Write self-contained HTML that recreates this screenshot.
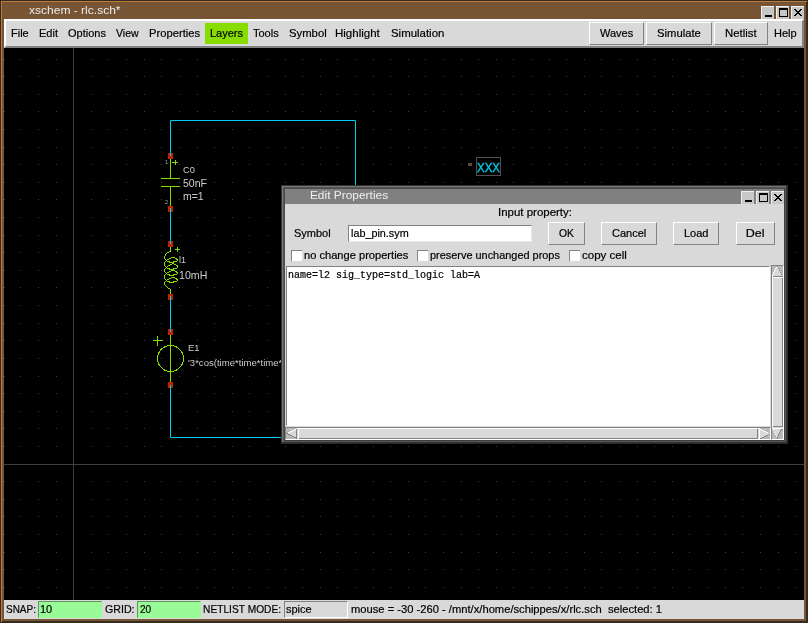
<!DOCTYPE html><html><head><meta charset="utf-8"><style>html,body{margin:0;padding:0;width:808px;height:623px;overflow:hidden;background:#2b2621}.a{position:absolute;box-sizing:content-box}svg.a{overflow:hidden}text{white-space:pre}</style></head><body><div class="a" style="left:0px;top:0px;width:808px;height:623px;background:#332a22;"></div>
<div class="a" style="left:1px;top:1px;width:806px;height:621px;background:#c07a38;"></div>
<div class="a" style="left:806px;top:2px;width:2px;height:621px;background:#332a22;"></div>
<div class="a" style="left:2px;top:621px;width:806px;height:2px;background:#332a22;"></div>
<div class="a" style="left:2px;top:2px;width:804px;height:619px;background:#765434;"></div>
<div class="a" style="left:761px;top:6px;width:12px;height:12px;background:#c6c6c6;border-top:1px solid #efefef;border-left:1px solid #efefef"></div>
<div class="a" style="left:776px;top:6px;width:12px;height:12px;background:#c6c6c6;border-top:1px solid #efefef;border-left:1px solid #efefef"></div>
<div class="a" style="left:791px;top:6px;width:12px;height:12px;background:#c6c6c6;border-top:1px solid #efefef;border-left:1px solid #efefef"></div>
<div class="a" style="left:765px;top:15px;width:7px;height:2px;background:#000;"></div>
<div class="a" style="left:779px;top:8px;width:7px;height:6px;border:1px solid #000;border-top-width:2px"></div>
<svg class="a" style="left:791px;top:6px" width="13" height="13"><path d="M3 3h2v1h-2zM9 3h2v1h-2zM4 4h2v1h-2zM8 4h2v1h-2zM5 5h4v1h-4zM6 6h2v1h-2zM5 7h4v1h-4zM4 8h2v1h-2zM8 8h2v1h-2zM3 9h2v1h-2zM9 9h2v1h-2z" fill="#000"/></svg>
<div class="a" style="left:4px;top:19px;width:796px;height:25px;background:#d9d9d9;border:2px solid;border-color:#ffffff #828282 #828282 #ffffff;"></div>
<div class="a" style="left:205px;top:23px;width:43px;height:21px;background:#88dd00;"></div>
<div class="a" style="left:589px;top:22px;width:53px;height:21px;background:#d9d9d9;border:1px solid;border-color:#ffffff #828282 #828282 #ffffff;"></div>
<div class="a" style="left:646px;top:22px;width:64px;height:21px;background:#d9d9d9;border:1px solid;border-color:#ffffff #828282 #828282 #ffffff;"></div>
<div class="a" style="left:714px;top:22px;width:52px;height:21px;background:#d9d9d9;border:1px solid;border-color:#ffffff #828282 #828282 #ffffff;"></div>
<div class="a" style="left:4px;top:48px;width:800px;height:552px;background:#000;"></div>
<svg class="a" style="left:0;top:0;will-change:transform" width="808" height="623"><clipPath id="cv"><rect x="4" y="48" width="800" height="552"/></clipPath><g clip-path="url(#cv)"><path d="M4 59h1v1h-1zM4 76h1v1h-1zM4 94h1v1h-1zM4 111h1v1h-1zM4 129h1v1h-1zM4 147h1v1h-1zM4 164h1v1h-1zM4 182h1v1h-1zM4 199h1v1h-1zM4 217h1v1h-1zM4 235h1v1h-1zM4 252h1v1h-1zM4 270h1v1h-1zM4 287h1v1h-1zM4 305h1v1h-1zM4 323h1v1h-1zM4 340h1v1h-1zM4 358h1v1h-1zM4 376h1v1h-1zM4 393h1v1h-1zM4 411h1v1h-1zM4 428h1v1h-1zM4 446h1v1h-1zM4 464h1v1h-1zM4 481h1v1h-1zM4 499h1v1h-1zM4 516h1v1h-1zM4 534h1v1h-1zM4 552h1v1h-1zM4 569h1v1h-1zM4 587h1v1h-1zM20 59h1v1h-1zM20 76h1v1h-1zM20 94h1v1h-1zM20 111h1v1h-1zM20 129h1v1h-1zM20 147h1v1h-1zM20 164h1v1h-1zM20 182h1v1h-1zM20 199h1v1h-1zM20 217h1v1h-1zM20 235h1v1h-1zM20 252h1v1h-1zM20 270h1v1h-1zM20 287h1v1h-1zM20 305h1v1h-1zM20 323h1v1h-1zM20 340h1v1h-1zM20 358h1v1h-1zM20 376h1v1h-1zM20 393h1v1h-1zM20 411h1v1h-1zM20 428h1v1h-1zM20 446h1v1h-1zM20 464h1v1h-1zM20 481h1v1h-1zM20 499h1v1h-1zM20 516h1v1h-1zM20 534h1v1h-1zM20 552h1v1h-1zM20 569h1v1h-1zM20 587h1v1h-1zM38 59h1v1h-1zM38 76h1v1h-1zM38 94h1v1h-1zM38 111h1v1h-1zM38 129h1v1h-1zM38 147h1v1h-1zM38 164h1v1h-1zM38 182h1v1h-1zM38 199h1v1h-1zM38 217h1v1h-1zM38 235h1v1h-1zM38 252h1v1h-1zM38 270h1v1h-1zM38 287h1v1h-1zM38 305h1v1h-1zM38 323h1v1h-1zM38 340h1v1h-1zM38 358h1v1h-1zM38 376h1v1h-1zM38 393h1v1h-1zM38 411h1v1h-1zM38 428h1v1h-1zM38 446h1v1h-1zM38 464h1v1h-1zM38 481h1v1h-1zM38 499h1v1h-1zM38 516h1v1h-1zM38 534h1v1h-1zM38 552h1v1h-1zM38 569h1v1h-1zM38 587h1v1h-1zM56 59h1v1h-1zM56 76h1v1h-1zM56 94h1v1h-1zM56 111h1v1h-1zM56 129h1v1h-1zM56 147h1v1h-1zM56 164h1v1h-1zM56 182h1v1h-1zM56 199h1v1h-1zM56 217h1v1h-1zM56 235h1v1h-1zM56 252h1v1h-1zM56 270h1v1h-1zM56 287h1v1h-1zM56 305h1v1h-1zM56 323h1v1h-1zM56 340h1v1h-1zM56 358h1v1h-1zM56 376h1v1h-1zM56 393h1v1h-1zM56 411h1v1h-1zM56 428h1v1h-1zM56 446h1v1h-1zM56 464h1v1h-1zM56 481h1v1h-1zM56 499h1v1h-1zM56 516h1v1h-1zM56 534h1v1h-1zM56 552h1v1h-1zM56 569h1v1h-1zM56 587h1v1h-1zM73 59h1v1h-1zM73 76h1v1h-1zM73 94h1v1h-1zM73 111h1v1h-1zM73 129h1v1h-1zM73 147h1v1h-1zM73 164h1v1h-1zM73 182h1v1h-1zM73 199h1v1h-1zM73 217h1v1h-1zM73 235h1v1h-1zM73 252h1v1h-1zM73 270h1v1h-1zM73 287h1v1h-1zM73 305h1v1h-1zM73 323h1v1h-1zM73 340h1v1h-1zM73 358h1v1h-1zM73 376h1v1h-1zM73 393h1v1h-1zM73 411h1v1h-1zM73 428h1v1h-1zM73 446h1v1h-1zM73 464h1v1h-1zM73 481h1v1h-1zM73 499h1v1h-1zM73 516h1v1h-1zM73 534h1v1h-1zM73 552h1v1h-1zM73 569h1v1h-1zM73 587h1v1h-1zM91 59h1v1h-1zM91 76h1v1h-1zM91 94h1v1h-1zM91 111h1v1h-1zM91 129h1v1h-1zM91 147h1v1h-1zM91 164h1v1h-1zM91 182h1v1h-1zM91 199h1v1h-1zM91 217h1v1h-1zM91 235h1v1h-1zM91 252h1v1h-1zM91 270h1v1h-1zM91 287h1v1h-1zM91 305h1v1h-1zM91 323h1v1h-1zM91 340h1v1h-1zM91 358h1v1h-1zM91 376h1v1h-1zM91 393h1v1h-1zM91 411h1v1h-1zM91 428h1v1h-1zM91 446h1v1h-1zM91 464h1v1h-1zM91 481h1v1h-1zM91 499h1v1h-1zM91 516h1v1h-1zM91 534h1v1h-1zM91 552h1v1h-1zM91 569h1v1h-1zM91 587h1v1h-1zM108 59h1v1h-1zM108 76h1v1h-1zM108 94h1v1h-1zM108 111h1v1h-1zM108 129h1v1h-1zM108 147h1v1h-1zM108 164h1v1h-1zM108 182h1v1h-1zM108 199h1v1h-1zM108 217h1v1h-1zM108 235h1v1h-1zM108 252h1v1h-1zM108 270h1v1h-1zM108 287h1v1h-1zM108 305h1v1h-1zM108 323h1v1h-1zM108 340h1v1h-1zM108 358h1v1h-1zM108 376h1v1h-1zM108 393h1v1h-1zM108 411h1v1h-1zM108 428h1v1h-1zM108 446h1v1h-1zM108 464h1v1h-1zM108 481h1v1h-1zM108 499h1v1h-1zM108 516h1v1h-1zM108 534h1v1h-1zM108 552h1v1h-1zM108 569h1v1h-1zM108 587h1v1h-1zM126 59h1v1h-1zM126 76h1v1h-1zM126 94h1v1h-1zM126 111h1v1h-1zM126 129h1v1h-1zM126 147h1v1h-1zM126 164h1v1h-1zM126 182h1v1h-1zM126 199h1v1h-1zM126 217h1v1h-1zM126 235h1v1h-1zM126 252h1v1h-1zM126 270h1v1h-1zM126 287h1v1h-1zM126 305h1v1h-1zM126 323h1v1h-1zM126 340h1v1h-1zM126 358h1v1h-1zM126 376h1v1h-1zM126 393h1v1h-1zM126 411h1v1h-1zM126 428h1v1h-1zM126 446h1v1h-1zM126 464h1v1h-1zM126 481h1v1h-1zM126 499h1v1h-1zM126 516h1v1h-1zM126 534h1v1h-1zM126 552h1v1h-1zM126 569h1v1h-1zM126 587h1v1h-1zM144 59h1v1h-1zM144 76h1v1h-1zM144 94h1v1h-1zM144 111h1v1h-1zM144 129h1v1h-1zM144 147h1v1h-1zM144 164h1v1h-1zM144 182h1v1h-1zM144 199h1v1h-1zM144 217h1v1h-1zM144 235h1v1h-1zM144 252h1v1h-1zM144 270h1v1h-1zM144 287h1v1h-1zM144 305h1v1h-1zM144 323h1v1h-1zM144 340h1v1h-1zM144 358h1v1h-1zM144 376h1v1h-1zM144 393h1v1h-1zM144 411h1v1h-1zM144 428h1v1h-1zM144 446h1v1h-1zM144 464h1v1h-1zM144 481h1v1h-1zM144 499h1v1h-1zM144 516h1v1h-1zM144 534h1v1h-1zM144 552h1v1h-1zM144 569h1v1h-1zM144 587h1v1h-1zM161 59h1v1h-1zM161 76h1v1h-1zM161 94h1v1h-1zM161 111h1v1h-1zM161 129h1v1h-1zM161 147h1v1h-1zM161 164h1v1h-1zM161 182h1v1h-1zM161 199h1v1h-1zM161 217h1v1h-1zM161 235h1v1h-1zM161 252h1v1h-1zM161 270h1v1h-1zM161 287h1v1h-1zM161 305h1v1h-1zM161 323h1v1h-1zM161 340h1v1h-1zM161 358h1v1h-1zM161 376h1v1h-1zM161 393h1v1h-1zM161 411h1v1h-1zM161 428h1v1h-1zM161 446h1v1h-1zM161 464h1v1h-1zM161 481h1v1h-1zM161 499h1v1h-1zM161 516h1v1h-1zM161 534h1v1h-1zM161 552h1v1h-1zM161 569h1v1h-1zM161 587h1v1h-1zM179 59h1v1h-1zM179 76h1v1h-1zM179 94h1v1h-1zM179 111h1v1h-1zM179 129h1v1h-1zM179 147h1v1h-1zM179 164h1v1h-1zM179 182h1v1h-1zM179 199h1v1h-1zM179 217h1v1h-1zM179 235h1v1h-1zM179 252h1v1h-1zM179 270h1v1h-1zM179 287h1v1h-1zM179 305h1v1h-1zM179 323h1v1h-1zM179 340h1v1h-1zM179 358h1v1h-1zM179 376h1v1h-1zM179 393h1v1h-1zM179 411h1v1h-1zM179 428h1v1h-1zM179 446h1v1h-1zM179 464h1v1h-1zM179 481h1v1h-1zM179 499h1v1h-1zM179 516h1v1h-1zM179 534h1v1h-1zM179 552h1v1h-1zM179 569h1v1h-1zM179 587h1v1h-1zM197 59h1v1h-1zM197 76h1v1h-1zM197 94h1v1h-1zM197 111h1v1h-1zM197 129h1v1h-1zM197 147h1v1h-1zM197 164h1v1h-1zM197 182h1v1h-1zM197 199h1v1h-1zM197 217h1v1h-1zM197 235h1v1h-1zM197 252h1v1h-1zM197 270h1v1h-1zM197 287h1v1h-1zM197 305h1v1h-1zM197 323h1v1h-1zM197 340h1v1h-1zM197 358h1v1h-1zM197 376h1v1h-1zM197 393h1v1h-1zM197 411h1v1h-1zM197 428h1v1h-1zM197 446h1v1h-1zM197 464h1v1h-1zM197 481h1v1h-1zM197 499h1v1h-1zM197 516h1v1h-1zM197 534h1v1h-1zM197 552h1v1h-1zM197 569h1v1h-1zM197 587h1v1h-1zM214 59h1v1h-1zM214 76h1v1h-1zM214 94h1v1h-1zM214 111h1v1h-1zM214 129h1v1h-1zM214 147h1v1h-1zM214 164h1v1h-1zM214 182h1v1h-1zM214 199h1v1h-1zM214 217h1v1h-1zM214 235h1v1h-1zM214 252h1v1h-1zM214 270h1v1h-1zM214 287h1v1h-1zM214 305h1v1h-1zM214 323h1v1h-1zM214 340h1v1h-1zM214 358h1v1h-1zM214 376h1v1h-1zM214 393h1v1h-1zM214 411h1v1h-1zM214 428h1v1h-1zM214 446h1v1h-1zM214 464h1v1h-1zM214 481h1v1h-1zM214 499h1v1h-1zM214 516h1v1h-1zM214 534h1v1h-1zM214 552h1v1h-1zM214 569h1v1h-1zM214 587h1v1h-1zM232 59h1v1h-1zM232 76h1v1h-1zM232 94h1v1h-1zM232 111h1v1h-1zM232 129h1v1h-1zM232 147h1v1h-1zM232 164h1v1h-1zM232 182h1v1h-1zM232 199h1v1h-1zM232 217h1v1h-1zM232 235h1v1h-1zM232 252h1v1h-1zM232 270h1v1h-1zM232 287h1v1h-1zM232 305h1v1h-1zM232 323h1v1h-1zM232 340h1v1h-1zM232 358h1v1h-1zM232 376h1v1h-1zM232 393h1v1h-1zM232 411h1v1h-1zM232 428h1v1h-1zM232 446h1v1h-1zM232 464h1v1h-1zM232 481h1v1h-1zM232 499h1v1h-1zM232 516h1v1h-1zM232 534h1v1h-1zM232 552h1v1h-1zM232 569h1v1h-1zM232 587h1v1h-1zM249 59h1v1h-1zM249 76h1v1h-1zM249 94h1v1h-1zM249 111h1v1h-1zM249 129h1v1h-1zM249 147h1v1h-1zM249 164h1v1h-1zM249 182h1v1h-1zM249 199h1v1h-1zM249 217h1v1h-1zM249 235h1v1h-1zM249 252h1v1h-1zM249 270h1v1h-1zM249 287h1v1h-1zM249 305h1v1h-1zM249 323h1v1h-1zM249 340h1v1h-1zM249 358h1v1h-1zM249 376h1v1h-1zM249 393h1v1h-1zM249 411h1v1h-1zM249 428h1v1h-1zM249 446h1v1h-1zM249 464h1v1h-1zM249 481h1v1h-1zM249 499h1v1h-1zM249 516h1v1h-1zM249 534h1v1h-1zM249 552h1v1h-1zM249 569h1v1h-1zM249 587h1v1h-1zM267 59h1v1h-1zM267 76h1v1h-1zM267 94h1v1h-1zM267 111h1v1h-1zM267 129h1v1h-1zM267 147h1v1h-1zM267 164h1v1h-1zM267 182h1v1h-1zM267 199h1v1h-1zM267 217h1v1h-1zM267 235h1v1h-1zM267 252h1v1h-1zM267 270h1v1h-1zM267 287h1v1h-1zM267 305h1v1h-1zM267 323h1v1h-1zM267 340h1v1h-1zM267 358h1v1h-1zM267 376h1v1h-1zM267 393h1v1h-1zM267 411h1v1h-1zM267 428h1v1h-1zM267 446h1v1h-1zM267 464h1v1h-1zM267 481h1v1h-1zM267 499h1v1h-1zM267 516h1v1h-1zM267 534h1v1h-1zM267 552h1v1h-1zM267 569h1v1h-1zM267 587h1v1h-1zM285 59h1v1h-1zM285 76h1v1h-1zM285 94h1v1h-1zM285 111h1v1h-1zM285 129h1v1h-1zM285 147h1v1h-1zM285 164h1v1h-1zM285 182h1v1h-1zM285 199h1v1h-1zM285 217h1v1h-1zM285 235h1v1h-1zM285 252h1v1h-1zM285 270h1v1h-1zM285 287h1v1h-1zM285 305h1v1h-1zM285 323h1v1h-1zM285 340h1v1h-1zM285 358h1v1h-1zM285 376h1v1h-1zM285 393h1v1h-1zM285 411h1v1h-1zM285 428h1v1h-1zM285 446h1v1h-1zM285 464h1v1h-1zM285 481h1v1h-1zM285 499h1v1h-1zM285 516h1v1h-1zM285 534h1v1h-1zM285 552h1v1h-1zM285 569h1v1h-1zM285 587h1v1h-1zM302 59h1v1h-1zM302 76h1v1h-1zM302 94h1v1h-1zM302 111h1v1h-1zM302 129h1v1h-1zM302 147h1v1h-1zM302 164h1v1h-1zM302 182h1v1h-1zM302 199h1v1h-1zM302 217h1v1h-1zM302 235h1v1h-1zM302 252h1v1h-1zM302 270h1v1h-1zM302 287h1v1h-1zM302 305h1v1h-1zM302 323h1v1h-1zM302 340h1v1h-1zM302 358h1v1h-1zM302 376h1v1h-1zM302 393h1v1h-1zM302 411h1v1h-1zM302 428h1v1h-1zM302 446h1v1h-1zM302 464h1v1h-1zM302 481h1v1h-1zM302 499h1v1h-1zM302 516h1v1h-1zM302 534h1v1h-1zM302 552h1v1h-1zM302 569h1v1h-1zM302 587h1v1h-1zM320 59h1v1h-1zM320 76h1v1h-1zM320 94h1v1h-1zM320 111h1v1h-1zM320 129h1v1h-1zM320 147h1v1h-1zM320 164h1v1h-1zM320 182h1v1h-1zM320 199h1v1h-1zM320 217h1v1h-1zM320 235h1v1h-1zM320 252h1v1h-1zM320 270h1v1h-1zM320 287h1v1h-1zM320 305h1v1h-1zM320 323h1v1h-1zM320 340h1v1h-1zM320 358h1v1h-1zM320 376h1v1h-1zM320 393h1v1h-1zM320 411h1v1h-1zM320 428h1v1h-1zM320 446h1v1h-1zM320 464h1v1h-1zM320 481h1v1h-1zM320 499h1v1h-1zM320 516h1v1h-1zM320 534h1v1h-1zM320 552h1v1h-1zM320 569h1v1h-1zM320 587h1v1h-1zM337 59h1v1h-1zM337 76h1v1h-1zM337 94h1v1h-1zM337 111h1v1h-1zM337 129h1v1h-1zM337 147h1v1h-1zM337 164h1v1h-1zM337 182h1v1h-1zM337 199h1v1h-1zM337 217h1v1h-1zM337 235h1v1h-1zM337 252h1v1h-1zM337 270h1v1h-1zM337 287h1v1h-1zM337 305h1v1h-1zM337 323h1v1h-1zM337 340h1v1h-1zM337 358h1v1h-1zM337 376h1v1h-1zM337 393h1v1h-1zM337 411h1v1h-1zM337 428h1v1h-1zM337 446h1v1h-1zM337 464h1v1h-1zM337 481h1v1h-1zM337 499h1v1h-1zM337 516h1v1h-1zM337 534h1v1h-1zM337 552h1v1h-1zM337 569h1v1h-1zM337 587h1v1h-1zM355 59h1v1h-1zM355 76h1v1h-1zM355 94h1v1h-1zM355 111h1v1h-1zM355 129h1v1h-1zM355 147h1v1h-1zM355 164h1v1h-1zM355 182h1v1h-1zM355 199h1v1h-1zM355 217h1v1h-1zM355 235h1v1h-1zM355 252h1v1h-1zM355 270h1v1h-1zM355 287h1v1h-1zM355 305h1v1h-1zM355 323h1v1h-1zM355 340h1v1h-1zM355 358h1v1h-1zM355 376h1v1h-1zM355 393h1v1h-1zM355 411h1v1h-1zM355 428h1v1h-1zM355 446h1v1h-1zM355 464h1v1h-1zM355 481h1v1h-1zM355 499h1v1h-1zM355 516h1v1h-1zM355 534h1v1h-1zM355 552h1v1h-1zM355 569h1v1h-1zM355 587h1v1h-1zM373 59h1v1h-1zM373 76h1v1h-1zM373 94h1v1h-1zM373 111h1v1h-1zM373 129h1v1h-1zM373 147h1v1h-1zM373 164h1v1h-1zM373 182h1v1h-1zM373 199h1v1h-1zM373 217h1v1h-1zM373 235h1v1h-1zM373 252h1v1h-1zM373 270h1v1h-1zM373 287h1v1h-1zM373 305h1v1h-1zM373 323h1v1h-1zM373 340h1v1h-1zM373 358h1v1h-1zM373 376h1v1h-1zM373 393h1v1h-1zM373 411h1v1h-1zM373 428h1v1h-1zM373 446h1v1h-1zM373 464h1v1h-1zM373 481h1v1h-1zM373 499h1v1h-1zM373 516h1v1h-1zM373 534h1v1h-1zM373 552h1v1h-1zM373 569h1v1h-1zM373 587h1v1h-1zM390 59h1v1h-1zM390 76h1v1h-1zM390 94h1v1h-1zM390 111h1v1h-1zM390 129h1v1h-1zM390 147h1v1h-1zM390 164h1v1h-1zM390 182h1v1h-1zM390 199h1v1h-1zM390 217h1v1h-1zM390 235h1v1h-1zM390 252h1v1h-1zM390 270h1v1h-1zM390 287h1v1h-1zM390 305h1v1h-1zM390 323h1v1h-1zM390 340h1v1h-1zM390 358h1v1h-1zM390 376h1v1h-1zM390 393h1v1h-1zM390 411h1v1h-1zM390 428h1v1h-1zM390 446h1v1h-1zM390 464h1v1h-1zM390 481h1v1h-1zM390 499h1v1h-1zM390 516h1v1h-1zM390 534h1v1h-1zM390 552h1v1h-1zM390 569h1v1h-1zM390 587h1v1h-1zM408 59h1v1h-1zM408 76h1v1h-1zM408 94h1v1h-1zM408 111h1v1h-1zM408 129h1v1h-1zM408 147h1v1h-1zM408 164h1v1h-1zM408 182h1v1h-1zM408 199h1v1h-1zM408 217h1v1h-1zM408 235h1v1h-1zM408 252h1v1h-1zM408 270h1v1h-1zM408 287h1v1h-1zM408 305h1v1h-1zM408 323h1v1h-1zM408 340h1v1h-1zM408 358h1v1h-1zM408 376h1v1h-1zM408 393h1v1h-1zM408 411h1v1h-1zM408 428h1v1h-1zM408 446h1v1h-1zM408 464h1v1h-1zM408 481h1v1h-1zM408 499h1v1h-1zM408 516h1v1h-1zM408 534h1v1h-1zM408 552h1v1h-1zM408 569h1v1h-1zM408 587h1v1h-1zM425 59h1v1h-1zM425 76h1v1h-1zM425 94h1v1h-1zM425 111h1v1h-1zM425 129h1v1h-1zM425 147h1v1h-1zM425 164h1v1h-1zM425 182h1v1h-1zM425 199h1v1h-1zM425 217h1v1h-1zM425 235h1v1h-1zM425 252h1v1h-1zM425 270h1v1h-1zM425 287h1v1h-1zM425 305h1v1h-1zM425 323h1v1h-1zM425 340h1v1h-1zM425 358h1v1h-1zM425 376h1v1h-1zM425 393h1v1h-1zM425 411h1v1h-1zM425 428h1v1h-1zM425 446h1v1h-1zM425 464h1v1h-1zM425 481h1v1h-1zM425 499h1v1h-1zM425 516h1v1h-1zM425 534h1v1h-1zM425 552h1v1h-1zM425 569h1v1h-1zM425 587h1v1h-1zM443 59h1v1h-1zM443 76h1v1h-1zM443 94h1v1h-1zM443 111h1v1h-1zM443 129h1v1h-1zM443 147h1v1h-1zM443 164h1v1h-1zM443 182h1v1h-1zM443 199h1v1h-1zM443 217h1v1h-1zM443 235h1v1h-1zM443 252h1v1h-1zM443 270h1v1h-1zM443 287h1v1h-1zM443 305h1v1h-1zM443 323h1v1h-1zM443 340h1v1h-1zM443 358h1v1h-1zM443 376h1v1h-1zM443 393h1v1h-1zM443 411h1v1h-1zM443 428h1v1h-1zM443 446h1v1h-1zM443 464h1v1h-1zM443 481h1v1h-1zM443 499h1v1h-1zM443 516h1v1h-1zM443 534h1v1h-1zM443 552h1v1h-1zM443 569h1v1h-1zM443 587h1v1h-1zM461 59h1v1h-1zM461 76h1v1h-1zM461 94h1v1h-1zM461 111h1v1h-1zM461 129h1v1h-1zM461 147h1v1h-1zM461 164h1v1h-1zM461 182h1v1h-1zM461 199h1v1h-1zM461 217h1v1h-1zM461 235h1v1h-1zM461 252h1v1h-1zM461 270h1v1h-1zM461 287h1v1h-1zM461 305h1v1h-1zM461 323h1v1h-1zM461 340h1v1h-1zM461 358h1v1h-1zM461 376h1v1h-1zM461 393h1v1h-1zM461 411h1v1h-1zM461 428h1v1h-1zM461 446h1v1h-1zM461 464h1v1h-1zM461 481h1v1h-1zM461 499h1v1h-1zM461 516h1v1h-1zM461 534h1v1h-1zM461 552h1v1h-1zM461 569h1v1h-1zM461 587h1v1h-1zM478 59h1v1h-1zM478 76h1v1h-1zM478 94h1v1h-1zM478 111h1v1h-1zM478 129h1v1h-1zM478 147h1v1h-1zM478 164h1v1h-1zM478 182h1v1h-1zM478 199h1v1h-1zM478 217h1v1h-1zM478 235h1v1h-1zM478 252h1v1h-1zM478 270h1v1h-1zM478 287h1v1h-1zM478 305h1v1h-1zM478 323h1v1h-1zM478 340h1v1h-1zM478 358h1v1h-1zM478 376h1v1h-1zM478 393h1v1h-1zM478 411h1v1h-1zM478 428h1v1h-1zM478 446h1v1h-1zM478 464h1v1h-1zM478 481h1v1h-1zM478 499h1v1h-1zM478 516h1v1h-1zM478 534h1v1h-1zM478 552h1v1h-1zM478 569h1v1h-1zM478 587h1v1h-1zM496 59h1v1h-1zM496 76h1v1h-1zM496 94h1v1h-1zM496 111h1v1h-1zM496 129h1v1h-1zM496 147h1v1h-1zM496 164h1v1h-1zM496 182h1v1h-1zM496 199h1v1h-1zM496 217h1v1h-1zM496 235h1v1h-1zM496 252h1v1h-1zM496 270h1v1h-1zM496 287h1v1h-1zM496 305h1v1h-1zM496 323h1v1h-1zM496 340h1v1h-1zM496 358h1v1h-1zM496 376h1v1h-1zM496 393h1v1h-1zM496 411h1v1h-1zM496 428h1v1h-1zM496 446h1v1h-1zM496 464h1v1h-1zM496 481h1v1h-1zM496 499h1v1h-1zM496 516h1v1h-1zM496 534h1v1h-1zM496 552h1v1h-1zM496 569h1v1h-1zM496 587h1v1h-1zM513 59h1v1h-1zM513 76h1v1h-1zM513 94h1v1h-1zM513 111h1v1h-1zM513 129h1v1h-1zM513 147h1v1h-1zM513 164h1v1h-1zM513 182h1v1h-1zM513 199h1v1h-1zM513 217h1v1h-1zM513 235h1v1h-1zM513 252h1v1h-1zM513 270h1v1h-1zM513 287h1v1h-1zM513 305h1v1h-1zM513 323h1v1h-1zM513 340h1v1h-1zM513 358h1v1h-1zM513 376h1v1h-1zM513 393h1v1h-1zM513 411h1v1h-1zM513 428h1v1h-1zM513 446h1v1h-1zM513 464h1v1h-1zM513 481h1v1h-1zM513 499h1v1h-1zM513 516h1v1h-1zM513 534h1v1h-1zM513 552h1v1h-1zM513 569h1v1h-1zM513 587h1v1h-1zM531 59h1v1h-1zM531 76h1v1h-1zM531 94h1v1h-1zM531 111h1v1h-1zM531 129h1v1h-1zM531 147h1v1h-1zM531 164h1v1h-1zM531 182h1v1h-1zM531 199h1v1h-1zM531 217h1v1h-1zM531 235h1v1h-1zM531 252h1v1h-1zM531 270h1v1h-1zM531 287h1v1h-1zM531 305h1v1h-1zM531 323h1v1h-1zM531 340h1v1h-1zM531 358h1v1h-1zM531 376h1v1h-1zM531 393h1v1h-1zM531 411h1v1h-1zM531 428h1v1h-1zM531 446h1v1h-1zM531 464h1v1h-1zM531 481h1v1h-1zM531 499h1v1h-1zM531 516h1v1h-1zM531 534h1v1h-1zM531 552h1v1h-1zM531 569h1v1h-1zM531 587h1v1h-1zM549 59h1v1h-1zM549 76h1v1h-1zM549 94h1v1h-1zM549 111h1v1h-1zM549 129h1v1h-1zM549 147h1v1h-1zM549 164h1v1h-1zM549 182h1v1h-1zM549 199h1v1h-1zM549 217h1v1h-1zM549 235h1v1h-1zM549 252h1v1h-1zM549 270h1v1h-1zM549 287h1v1h-1zM549 305h1v1h-1zM549 323h1v1h-1zM549 340h1v1h-1zM549 358h1v1h-1zM549 376h1v1h-1zM549 393h1v1h-1zM549 411h1v1h-1zM549 428h1v1h-1zM549 446h1v1h-1zM549 464h1v1h-1zM549 481h1v1h-1zM549 499h1v1h-1zM549 516h1v1h-1zM549 534h1v1h-1zM549 552h1v1h-1zM549 569h1v1h-1zM549 587h1v1h-1zM566 59h1v1h-1zM566 76h1v1h-1zM566 94h1v1h-1zM566 111h1v1h-1zM566 129h1v1h-1zM566 147h1v1h-1zM566 164h1v1h-1zM566 182h1v1h-1zM566 199h1v1h-1zM566 217h1v1h-1zM566 235h1v1h-1zM566 252h1v1h-1zM566 270h1v1h-1zM566 287h1v1h-1zM566 305h1v1h-1zM566 323h1v1h-1zM566 340h1v1h-1zM566 358h1v1h-1zM566 376h1v1h-1zM566 393h1v1h-1zM566 411h1v1h-1zM566 428h1v1h-1zM566 446h1v1h-1zM566 464h1v1h-1zM566 481h1v1h-1zM566 499h1v1h-1zM566 516h1v1h-1zM566 534h1v1h-1zM566 552h1v1h-1zM566 569h1v1h-1zM566 587h1v1h-1zM584 59h1v1h-1zM584 76h1v1h-1zM584 94h1v1h-1zM584 111h1v1h-1zM584 129h1v1h-1zM584 147h1v1h-1zM584 164h1v1h-1zM584 182h1v1h-1zM584 199h1v1h-1zM584 217h1v1h-1zM584 235h1v1h-1zM584 252h1v1h-1zM584 270h1v1h-1zM584 287h1v1h-1zM584 305h1v1h-1zM584 323h1v1h-1zM584 340h1v1h-1zM584 358h1v1h-1zM584 376h1v1h-1zM584 393h1v1h-1zM584 411h1v1h-1zM584 428h1v1h-1zM584 446h1v1h-1zM584 464h1v1h-1zM584 481h1v1h-1zM584 499h1v1h-1zM584 516h1v1h-1zM584 534h1v1h-1zM584 552h1v1h-1zM584 569h1v1h-1zM584 587h1v1h-1zM601 59h1v1h-1zM601 76h1v1h-1zM601 94h1v1h-1zM601 111h1v1h-1zM601 129h1v1h-1zM601 147h1v1h-1zM601 164h1v1h-1zM601 182h1v1h-1zM601 199h1v1h-1zM601 217h1v1h-1zM601 235h1v1h-1zM601 252h1v1h-1zM601 270h1v1h-1zM601 287h1v1h-1zM601 305h1v1h-1zM601 323h1v1h-1zM601 340h1v1h-1zM601 358h1v1h-1zM601 376h1v1h-1zM601 393h1v1h-1zM601 411h1v1h-1zM601 428h1v1h-1zM601 446h1v1h-1zM601 464h1v1h-1zM601 481h1v1h-1zM601 499h1v1h-1zM601 516h1v1h-1zM601 534h1v1h-1zM601 552h1v1h-1zM601 569h1v1h-1zM601 587h1v1h-1zM619 59h1v1h-1zM619 76h1v1h-1zM619 94h1v1h-1zM619 111h1v1h-1zM619 129h1v1h-1zM619 147h1v1h-1zM619 164h1v1h-1zM619 182h1v1h-1zM619 199h1v1h-1zM619 217h1v1h-1zM619 235h1v1h-1zM619 252h1v1h-1zM619 270h1v1h-1zM619 287h1v1h-1zM619 305h1v1h-1zM619 323h1v1h-1zM619 340h1v1h-1zM619 358h1v1h-1zM619 376h1v1h-1zM619 393h1v1h-1zM619 411h1v1h-1zM619 428h1v1h-1zM619 446h1v1h-1zM619 464h1v1h-1zM619 481h1v1h-1zM619 499h1v1h-1zM619 516h1v1h-1zM619 534h1v1h-1zM619 552h1v1h-1zM619 569h1v1h-1zM619 587h1v1h-1zM637 59h1v1h-1zM637 76h1v1h-1zM637 94h1v1h-1zM637 111h1v1h-1zM637 129h1v1h-1zM637 147h1v1h-1zM637 164h1v1h-1zM637 182h1v1h-1zM637 199h1v1h-1zM637 217h1v1h-1zM637 235h1v1h-1zM637 252h1v1h-1zM637 270h1v1h-1zM637 287h1v1h-1zM637 305h1v1h-1zM637 323h1v1h-1zM637 340h1v1h-1zM637 358h1v1h-1zM637 376h1v1h-1zM637 393h1v1h-1zM637 411h1v1h-1zM637 428h1v1h-1zM637 446h1v1h-1zM637 464h1v1h-1zM637 481h1v1h-1zM637 499h1v1h-1zM637 516h1v1h-1zM637 534h1v1h-1zM637 552h1v1h-1zM637 569h1v1h-1zM637 587h1v1h-1zM654 59h1v1h-1zM654 76h1v1h-1zM654 94h1v1h-1zM654 111h1v1h-1zM654 129h1v1h-1zM654 147h1v1h-1zM654 164h1v1h-1zM654 182h1v1h-1zM654 199h1v1h-1zM654 217h1v1h-1zM654 235h1v1h-1zM654 252h1v1h-1zM654 270h1v1h-1zM654 287h1v1h-1zM654 305h1v1h-1zM654 323h1v1h-1zM654 340h1v1h-1zM654 358h1v1h-1zM654 376h1v1h-1zM654 393h1v1h-1zM654 411h1v1h-1zM654 428h1v1h-1zM654 446h1v1h-1zM654 464h1v1h-1zM654 481h1v1h-1zM654 499h1v1h-1zM654 516h1v1h-1zM654 534h1v1h-1zM654 552h1v1h-1zM654 569h1v1h-1zM654 587h1v1h-1zM672 59h1v1h-1zM672 76h1v1h-1zM672 94h1v1h-1zM672 111h1v1h-1zM672 129h1v1h-1zM672 147h1v1h-1zM672 164h1v1h-1zM672 182h1v1h-1zM672 199h1v1h-1zM672 217h1v1h-1zM672 235h1v1h-1zM672 252h1v1h-1zM672 270h1v1h-1zM672 287h1v1h-1zM672 305h1v1h-1zM672 323h1v1h-1zM672 340h1v1h-1zM672 358h1v1h-1zM672 376h1v1h-1zM672 393h1v1h-1zM672 411h1v1h-1zM672 428h1v1h-1zM672 446h1v1h-1zM672 464h1v1h-1zM672 481h1v1h-1zM672 499h1v1h-1zM672 516h1v1h-1zM672 534h1v1h-1zM672 552h1v1h-1zM672 569h1v1h-1zM672 587h1v1h-1zM689 59h1v1h-1zM689 76h1v1h-1zM689 94h1v1h-1zM689 111h1v1h-1zM689 129h1v1h-1zM689 147h1v1h-1zM689 164h1v1h-1zM689 182h1v1h-1zM689 199h1v1h-1zM689 217h1v1h-1zM689 235h1v1h-1zM689 252h1v1h-1zM689 270h1v1h-1zM689 287h1v1h-1zM689 305h1v1h-1zM689 323h1v1h-1zM689 340h1v1h-1zM689 358h1v1h-1zM689 376h1v1h-1zM689 393h1v1h-1zM689 411h1v1h-1zM689 428h1v1h-1zM689 446h1v1h-1zM689 464h1v1h-1zM689 481h1v1h-1zM689 499h1v1h-1zM689 516h1v1h-1zM689 534h1v1h-1zM689 552h1v1h-1zM689 569h1v1h-1zM689 587h1v1h-1zM707 59h1v1h-1zM707 76h1v1h-1zM707 94h1v1h-1zM707 111h1v1h-1zM707 129h1v1h-1zM707 147h1v1h-1zM707 164h1v1h-1zM707 182h1v1h-1zM707 199h1v1h-1zM707 217h1v1h-1zM707 235h1v1h-1zM707 252h1v1h-1zM707 270h1v1h-1zM707 287h1v1h-1zM707 305h1v1h-1zM707 323h1v1h-1zM707 340h1v1h-1zM707 358h1v1h-1zM707 376h1v1h-1zM707 393h1v1h-1zM707 411h1v1h-1zM707 428h1v1h-1zM707 446h1v1h-1zM707 464h1v1h-1zM707 481h1v1h-1zM707 499h1v1h-1zM707 516h1v1h-1zM707 534h1v1h-1zM707 552h1v1h-1zM707 569h1v1h-1zM707 587h1v1h-1zM725 59h1v1h-1zM725 76h1v1h-1zM725 94h1v1h-1zM725 111h1v1h-1zM725 129h1v1h-1zM725 147h1v1h-1zM725 164h1v1h-1zM725 182h1v1h-1zM725 199h1v1h-1zM725 217h1v1h-1zM725 235h1v1h-1zM725 252h1v1h-1zM725 270h1v1h-1zM725 287h1v1h-1zM725 305h1v1h-1zM725 323h1v1h-1zM725 340h1v1h-1zM725 358h1v1h-1zM725 376h1v1h-1zM725 393h1v1h-1zM725 411h1v1h-1zM725 428h1v1h-1zM725 446h1v1h-1zM725 464h1v1h-1zM725 481h1v1h-1zM725 499h1v1h-1zM725 516h1v1h-1zM725 534h1v1h-1zM725 552h1v1h-1zM725 569h1v1h-1zM725 587h1v1h-1zM742 59h1v1h-1zM742 76h1v1h-1zM742 94h1v1h-1zM742 111h1v1h-1zM742 129h1v1h-1zM742 147h1v1h-1zM742 164h1v1h-1zM742 182h1v1h-1zM742 199h1v1h-1zM742 217h1v1h-1zM742 235h1v1h-1zM742 252h1v1h-1zM742 270h1v1h-1zM742 287h1v1h-1zM742 305h1v1h-1zM742 323h1v1h-1zM742 340h1v1h-1zM742 358h1v1h-1zM742 376h1v1h-1zM742 393h1v1h-1zM742 411h1v1h-1zM742 428h1v1h-1zM742 446h1v1h-1zM742 464h1v1h-1zM742 481h1v1h-1zM742 499h1v1h-1zM742 516h1v1h-1zM742 534h1v1h-1zM742 552h1v1h-1zM742 569h1v1h-1zM742 587h1v1h-1zM760 59h1v1h-1zM760 76h1v1h-1zM760 94h1v1h-1zM760 111h1v1h-1zM760 129h1v1h-1zM760 147h1v1h-1zM760 164h1v1h-1zM760 182h1v1h-1zM760 199h1v1h-1zM760 217h1v1h-1zM760 235h1v1h-1zM760 252h1v1h-1zM760 270h1v1h-1zM760 287h1v1h-1zM760 305h1v1h-1zM760 323h1v1h-1zM760 340h1v1h-1zM760 358h1v1h-1zM760 376h1v1h-1zM760 393h1v1h-1zM760 411h1v1h-1zM760 428h1v1h-1zM760 446h1v1h-1zM760 464h1v1h-1zM760 481h1v1h-1zM760 499h1v1h-1zM760 516h1v1h-1zM760 534h1v1h-1zM760 552h1v1h-1zM760 569h1v1h-1zM760 587h1v1h-1zM778 59h1v1h-1zM778 76h1v1h-1zM778 94h1v1h-1zM778 111h1v1h-1zM778 129h1v1h-1zM778 147h1v1h-1zM778 164h1v1h-1zM778 182h1v1h-1zM778 199h1v1h-1zM778 217h1v1h-1zM778 235h1v1h-1zM778 252h1v1h-1zM778 270h1v1h-1zM778 287h1v1h-1zM778 305h1v1h-1zM778 323h1v1h-1zM778 340h1v1h-1zM778 358h1v1h-1zM778 376h1v1h-1zM778 393h1v1h-1zM778 411h1v1h-1zM778 428h1v1h-1zM778 446h1v1h-1zM778 464h1v1h-1zM778 481h1v1h-1zM778 499h1v1h-1zM778 516h1v1h-1zM778 534h1v1h-1zM778 552h1v1h-1zM778 569h1v1h-1zM778 587h1v1h-1zM795 59h1v1h-1zM795 76h1v1h-1zM795 94h1v1h-1zM795 111h1v1h-1zM795 129h1v1h-1zM795 147h1v1h-1zM795 164h1v1h-1zM795 182h1v1h-1zM795 199h1v1h-1zM795 217h1v1h-1zM795 235h1v1h-1zM795 252h1v1h-1zM795 270h1v1h-1zM795 287h1v1h-1zM795 305h1v1h-1zM795 323h1v1h-1zM795 340h1v1h-1zM795 358h1v1h-1zM795 376h1v1h-1zM795 393h1v1h-1zM795 411h1v1h-1zM795 428h1v1h-1zM795 446h1v1h-1zM795 464h1v1h-1zM795 481h1v1h-1zM795 499h1v1h-1zM795 516h1v1h-1zM795 534h1v1h-1zM795 552h1v1h-1zM795 569h1v1h-1zM795 587h1v1h-1z" fill="#3f3f3f"/><path d="M73.5 48V600M4 464.5H804" stroke="#3f3f3f" stroke-width="1"/><path d="M170.5 158V178M161 178.5H180M161 186.5H180M170.5 187V206M172 162.5H178M175.5 160V165" stroke="#88dd00" fill="none"/><path d="M175 249.5H180M177.5 247V252" stroke="#88dd00" fill="none"/><path d="M164 256h1v1h-1zM164 257h1v1h-1zM164 258h1v1h-1zM164 262h1v1h-1zM164 263h1v1h-1zM164 264h1v1h-1zM164 265h1v1h-1zM164 269h1v1h-1zM164 270h1v1h-1zM164 271h1v1h-1zM164 275h1v1h-1zM164 276h1v1h-1zM164 277h1v1h-1zM164 278h1v1h-1zM164 282h1v1h-1zM164 283h1v1h-1zM164 284h1v1h-1zM165 254h1v1h-1zM165 255h1v1h-1zM165 259h1v1h-1zM165 261h1v1h-1zM165 266h1v1h-1zM165 268h1v1h-1zM165 272h1v1h-1zM165 274h1v1h-1zM165 279h1v1h-1zM165 281h1v1h-1zM165 285h1v1h-1zM166 253h1v1h-1zM166 260h1v1h-1zM166 267h1v1h-1zM166 273h1v1h-1zM166 280h1v1h-1zM166 286h1v1h-1zM167 252h1v1h-1zM167 259h1v1h-1zM167 261h1v1h-1zM167 266h1v1h-1zM167 268h1v1h-1zM167 272h1v1h-1zM167 274h1v1h-1zM167 279h1v1h-1zM167 281h1v1h-1zM167 287h1v1h-1zM168 252h1v1h-1zM168 259h1v1h-1zM168 261h1v1h-1zM168 265h1v1h-1zM168 268h1v1h-1zM168 272h1v1h-1zM168 274h1v1h-1zM168 279h1v1h-1zM168 281h1v1h-1zM168 288h1v1h-1zM169 251h1v1h-1zM169 258h1v1h-1zM169 261h1v1h-1zM169 262h1v1h-1zM169 265h1v1h-1zM169 268h1v1h-1zM169 269h1v1h-1zM169 271h1v1h-1zM169 274h1v1h-1zM169 275h1v1h-1zM169 278h1v1h-1zM169 281h1v1h-1zM169 282h1v1h-1zM169 288h1v1h-1zM170 247h1v1h-1zM170 248h1v1h-1zM170 249h1v1h-1zM170 250h1v1h-1zM170 251h1v1h-1zM170 258h1v1h-1zM170 262h1v1h-1zM170 264h1v1h-1zM170 269h1v1h-1zM170 271h1v1h-1zM170 275h1v1h-1zM170 278h1v1h-1zM170 282h1v1h-1zM170 289h1v1h-1zM170 290h1v1h-1zM170 291h1v1h-1zM170 292h1v1h-1zM170 293h1v1h-1zM171 257h1v1h-1zM171 262h1v1h-1zM171 264h1v1h-1zM171 269h1v1h-1zM171 270h1v1h-1zM171 275h1v1h-1zM171 277h1v1h-1zM171 282h1v1h-1zM172 257h1v1h-1zM172 262h1v1h-1zM172 263h1v1h-1zM172 269h1v1h-1zM172 270h1v1h-1zM172 275h1v1h-1zM172 277h1v1h-1zM172 282h1v1h-1zM173 257h1v1h-1zM173 261h1v1h-1zM173 262h1v1h-1zM173 263h1v1h-1zM173 268h1v1h-1zM173 269h1v1h-1zM173 270h1v1h-1zM173 274h1v1h-1zM173 275h1v1h-1zM173 277h1v1h-1zM173 281h1v1h-1zM173 282h1v1h-1zM174 257h1v1h-1zM174 261h1v1h-1zM174 264h1v1h-1zM174 268h1v1h-1zM174 270h1v1h-1zM174 274h1v1h-1zM174 277h1v1h-1zM174 281h1v1h-1zM175 258h1v1h-1zM175 261h1v1h-1zM175 264h1v1h-1zM175 268h1v1h-1zM175 271h1v1h-1zM175 274h1v1h-1zM175 278h1v1h-1zM175 281h1v1h-1zM176 258h1v1h-1zM176 259h1v1h-1zM176 261h1v1h-1zM176 265h1v1h-1zM176 268h1v1h-1zM176 271h1v1h-1zM176 272h1v1h-1zM176 274h1v1h-1zM176 278h1v1h-1zM176 279h1v1h-1zM176 281h1v1h-1zM177 259h1v1h-1zM177 260h1v1h-1zM177 265h1v1h-1zM177 266h1v1h-1zM177 267h1v1h-1zM177 272h1v1h-1zM177 273h1v1h-1zM177 279h1v1h-1zM177 280h1v1h-1z" fill="#88dd00"/><circle cx="170.5" cy="358.5" r="13" stroke="#88dd00" fill="none" shape-rendering="crispEdges"/><path d="M170.5 334V382M153 340.5H163M157.5 336V346" stroke="#88dd00" fill="none"/><rect x="168" y="153" width="5" height="6" fill="#bb2200"/><rect x="168" y="206" width="5" height="6" fill="#bb2200"/><rect x="168" y="241" width="5" height="6" fill="#bb2200"/><rect x="168" y="294" width="5" height="6" fill="#bb2200"/><rect x="168" y="329" width="5" height="6" fill="#bb2200"/><rect x="168" y="382" width="5" height="6" fill="#bb2200"/><path d="M170.5 156V120.5H355.5V200M170.5 208V244M170.5 296V332M170.5 385V437.5H290" stroke="#00ccee" fill="none"/><rect x="476.5" y="157.5" width="24" height="18" stroke="#505050" fill="none"/><rect x="468" y="163" width="4" height="3" fill="#505050"/><rect x="469" y="164" width="2" height="1" fill="#bb2200"/><text x="183.00" y="173" font-family="Liberation Sans" font-size="8.5" fill="#cccccc" textLength="11.86" lengthAdjust="spacingAndGlyphs">C0</text><text x="183.00" y="187" font-family="Liberation Sans" font-size="11" fill="#cccccc" textLength="24.07" lengthAdjust="spacingAndGlyphs">50nF</text><text x="183.00" y="200" font-family="Liberation Sans" font-size="11" fill="#cccccc" textLength="20.68" lengthAdjust="spacingAndGlyphs">m=1</text><text x="165.00" y="164" font-family="Liberation Sans" font-size="5.5" fill="#aaaaaa" textLength="3.06" lengthAdjust="spacingAndGlyphs">1</text><text x="165.00" y="204" font-family="Liberation Sans" font-size="5.5" fill="#aaaaaa" textLength="3.06" lengthAdjust="spacingAndGlyphs">2</text><text x="179.00" y="263" font-family="Liberation Sans" font-size="9" fill="#cccccc" textLength="7.02" lengthAdjust="spacingAndGlyphs">l1</text><text x="179.04" y="279" font-family="Liberation Sans" font-size="11" fill="#cccccc" textLength="28.30" lengthAdjust="spacingAndGlyphs">10mH</text><text x="188.00" y="351" font-family="Liberation Sans" font-size="8.5" fill="#cccccc" textLength="11.45" lengthAdjust="spacingAndGlyphs">E1</text><text x="188.00" y="366" font-family="Liberation Sans" font-size="8.5" fill="#cccccc" textLength="119.87" lengthAdjust="spacingAndGlyphs">'3*cos(time*time*time*1e11)'</text><text x="477.00" y="172" font-family="Liberation Sans" font-size="12" fill="#00ccee" stroke="#00ccee" stroke-width="0.35" textLength="23.01" lengthAdjust="spacingAndGlyphs">XXX</text></g></svg>
<div class="a" style="left:4px;top:600px;width:800px;height:19px;background:#d9d9d9;"></div>
<div class="a" style="left:38px;top:601px;width:62px;height:15px;background:#98fb98;border:1px solid;border-color:#5b965b #98fb98 #98fb98 #5b965b;"></div>
<div class="a" style="left:137px;top:601px;width:62px;height:15px;background:#98fb98;border:1px solid;border-color:#5b965b #98fb98 #98fb98 #5b965b;"></div>
<div class="a" style="left:284px;top:601px;width:62px;height:15px;background:#d9d9d9;border:1px solid;border-color:#828282 #ffffff #ffffff #828282;"></div>
<div class="a" style="left:281px;top:185px;width:507px;height:259px;background:#333333;"></div>
<div class="a" style="left:282px;top:186px;width:505px;height:257px;background:#777777;"></div>
<div class="a" style="left:283px;top:187px;width:503px;height:255px;background:#555555;"></div>
<div class="a" style="left:284px;top:188px;width:501px;height:253px;background:#4a4a4a;"></div>
<div class="a" style="left:785px;top:187px;width:1px;height:255px;background:#555555;"></div>
<div class="a" style="left:283px;top:441px;width:503px;height:1px;background:#555555;"></div>
<div class="a" style="left:784px;top:188px;width:1px;height:253px;background:#404040;"></div>
<div class="a" style="left:284px;top:440px;width:501px;height:1px;background:#404040;"></div>
<div class="a" style="left:786px;top:186px;width:1px;height:257px;background:#333333;"></div>
<div class="a" style="left:282px;top:442px;width:505px;height:1px;background:#333333;"></div>
<div class="a" style="left:787px;top:185px;width:1px;height:259px;background:#2a2a2a;"></div>
<div class="a" style="left:281px;top:443px;width:507px;height:1px;background:#2a2a2a;"></div>
<div class="a" style="left:285px;top:189px;width:499px;height:15px;background:#808080;"></div>
<div class="a" style="left:285px;top:204px;width:499px;height:236px;background:#d9d9d9;"></div>
<div class="a" style="left:741px;top:191px;width:12px;height:12px;background:#c8c8c8;border-top:1px solid #eeeeee;border-left:1px solid #eeeeee"></div>
<div class="a" style="left:756px;top:191px;width:12px;height:12px;background:#c8c8c8;border-top:1px solid #eeeeee;border-left:1px solid #eeeeee"></div>
<div class="a" style="left:771px;top:191px;width:12px;height:12px;background:#c8c8c8;border-top:1px solid #eeeeee;border-left:1px solid #eeeeee"></div>
<div class="a" style="left:745px;top:200px;width:7px;height:2px;background:#000;"></div>
<div class="a" style="left:759px;top:193px;width:7px;height:6px;border:1px solid #000;border-top-width:2px"></div>
<svg class="a" style="left:771px;top:191px" width="13" height="13"><path d="M3 3h2v1h-2zM9 3h2v1h-2zM4 4h2v1h-2zM8 4h2v1h-2zM5 5h4v1h-4zM6 6h2v1h-2zM5 7h4v1h-4zM4 8h2v1h-2zM8 8h2v1h-2zM3 9h2v1h-2zM9 9h2v1h-2z" fill="#000"/></svg>
<div class="a" style="left:348px;top:225px;width:182px;height:15px;background:#ffffff;border:1px solid;border-color:#828282 #e8e8e8 #e8e8e8 #828282;"></div>
<div class="a" style="left:548px;top:222px;width:35px;height:21px;background:#d9d9d9;border:1px solid;border-color:#ffffff #828282 #828282 #ffffff;"></div>
<div class="a" style="left:601px;top:222px;width:54px;height:21px;background:#d9d9d9;border:1px solid;border-color:#ffffff #828282 #828282 #ffffff;"></div>
<div class="a" style="left:673px;top:222px;width:44px;height:21px;background:#d9d9d9;border:1px solid;border-color:#ffffff #828282 #828282 #ffffff;"></div>
<div class="a" style="left:736px;top:222px;width:37px;height:21px;background:#d9d9d9;border:1px solid;border-color:#ffffff #828282 #828282 #ffffff;"></div>
<div class="a" style="left:291px;top:250px;width:10px;height:10px;background:#fff;border-top:1px solid #828282;border-left:1px solid #828282"></div>
<div class="a" style="left:417px;top:250px;width:10px;height:10px;background:#fff;border-top:1px solid #828282;border-left:1px solid #828282"></div>
<div class="a" style="left:569px;top:250px;width:10px;height:10px;background:#fff;border-top:1px solid #828282;border-left:1px solid #828282"></div>
<div class="a" style="left:286px;top:266px;width:482px;height:158px;background:#fff;border:1px solid;border-color:#828282 #fff #fff #828282"></div>
<div class="a" style="left:771px;top:265px;width:11px;height:173px;background:#d9d9d9;border:1px solid;border-color:#828282 #ffffff #ffffff #828282;"></div>
<div class="a" style="left:285px;top:427px;width:484px;height:11px;background:#d9d9d9;border:1px solid;border-color:#828282 #ffffff #ffffff #828282;"></div>
<svg class="a" style="left:0;top:0" width="808" height="623"><rect x="772" y="266" width="11" height="11" fill="#b8b8b8"/><rect x="772" y="277" width="11" height="150" fill="#d9d9d9"/><rect x="772" y="428" width="11" height="11" fill="#b8b8b8"/><rect x="286" y="428" width="11" height="11" fill="#b8b8b8"/><rect x="298" y="428" width="460" height="11" fill="#d9d9d9"/><rect x="759" y="428" width="11" height="11" fill="#b8b8b8"/><path d="M777 267h1v1h-1zM776 268h1v1h-1zM777 268h1v1h-1zM778 268h1v1h-1zM776 269h1v1h-1zM777 269h1v1h-1zM778 269h1v1h-1zM775 270h1v1h-1zM776 270h1v1h-1zM777 270h1v1h-1zM778 270h1v1h-1zM779 270h1v1h-1zM775 271h1v1h-1zM776 271h1v1h-1zM777 271h1v1h-1zM778 271h1v1h-1zM779 271h1v1h-1zM774 272h1v1h-1zM775 272h1v1h-1zM776 272h1v1h-1zM777 272h1v1h-1zM778 272h1v1h-1zM779 272h1v1h-1zM780 272h1v1h-1zM774 273h1v1h-1zM775 273h1v1h-1zM776 273h1v1h-1zM777 273h1v1h-1zM778 273h1v1h-1zM779 273h1v1h-1zM780 273h1v1h-1zM773 274h1v1h-1zM774 274h1v1h-1zM775 274h1v1h-1zM776 274h1v1h-1zM777 274h1v1h-1zM778 274h1v1h-1zM779 274h1v1h-1zM780 274h1v1h-1zM781 274h1v1h-1zM773 275h1v1h-1zM774 275h1v1h-1zM775 275h1v1h-1zM776 275h1v1h-1zM777 275h1v1h-1zM778 275h1v1h-1zM779 275h1v1h-1zM780 275h1v1h-1zM781 275h1v1h-1zM773 429h1v1h-1zM774 429h1v1h-1zM775 429h1v1h-1zM776 429h1v1h-1zM777 429h1v1h-1zM778 429h1v1h-1zM779 429h1v1h-1zM780 429h1v1h-1zM774 430h1v1h-1zM775 430h1v1h-1zM776 430h1v1h-1zM777 430h1v1h-1zM778 430h1v1h-1zM779 430h1v1h-1zM774 431h1v1h-1zM775 431h1v1h-1zM776 431h1v1h-1zM777 431h1v1h-1zM778 431h1v1h-1zM779 431h1v1h-1zM775 432h1v1h-1zM776 432h1v1h-1zM777 432h1v1h-1zM778 432h1v1h-1zM775 433h1v1h-1zM776 433h1v1h-1zM777 433h1v1h-1zM778 433h1v1h-1zM776 434h1v1h-1zM777 434h1v1h-1zM776 435h1v1h-1zM777 435h1v1h-1zM288 433h1v1h-1zM289 433h1v1h-1zM290 432h1v1h-1zM290 433h1v1h-1zM290 434h1v1h-1zM291 432h1v1h-1zM291 433h1v1h-1zM291 434h1v1h-1zM292 431h1v1h-1zM292 432h1v1h-1zM292 433h1v1h-1zM292 434h1v1h-1zM292 435h1v1h-1zM293 431h1v1h-1zM293 432h1v1h-1zM293 433h1v1h-1zM293 434h1v1h-1zM293 435h1v1h-1zM294 430h1v1h-1zM294 431h1v1h-1zM294 432h1v1h-1zM294 433h1v1h-1zM294 434h1v1h-1zM294 435h1v1h-1zM294 436h1v1h-1zM295 430h1v1h-1zM295 431h1v1h-1zM295 432h1v1h-1zM295 433h1v1h-1zM295 434h1v1h-1zM295 435h1v1h-1zM295 436h1v1h-1zM760 430h1v1h-1zM760 431h1v1h-1zM760 432h1v1h-1zM760 433h1v1h-1zM760 434h1v1h-1zM760 435h1v1h-1zM760 436h1v1h-1zM760 437h1v1h-1zM761 430h1v1h-1zM761 431h1v1h-1zM761 432h1v1h-1zM761 433h1v1h-1zM761 434h1v1h-1zM761 435h1v1h-1zM761 436h1v1h-1zM761 437h1v1h-1zM762 431h1v1h-1zM762 432h1v1h-1zM762 433h1v1h-1zM762 434h1v1h-1zM762 435h1v1h-1zM762 436h1v1h-1zM763 431h1v1h-1zM763 432h1v1h-1zM763 433h1v1h-1zM763 434h1v1h-1zM763 435h1v1h-1zM763 436h1v1h-1zM764 432h1v1h-1zM764 433h1v1h-1zM764 434h1v1h-1zM764 435h1v1h-1zM765 432h1v1h-1zM765 433h1v1h-1zM765 434h1v1h-1zM765 435h1v1h-1zM766 433h1v1h-1zM766 434h1v1h-1zM767 433h1v1h-1zM767 434h1v1h-1z" fill="#d9d9d9"/><path d="M776 267h1v1h-1zM775 268h1v1h-1zM775 269h1v1h-1zM774 270h1v1h-1zM774 271h1v1h-1zM773 272h1v1h-1zM773 273h1v1h-1zM772 274h1v1h-1zM772 275h1v1h-1zM772 276h1v1h-1zM772 277h1v1h-1zM773 277h1v1h-1zM774 277h1v1h-1zM775 277h1v1h-1zM776 277h1v1h-1zM777 277h1v1h-1zM778 277h1v1h-1zM779 277h1v1h-1zM780 277h1v1h-1zM781 277h1v1h-1zM782 277h1v1h-1zM772 278h1v1h-1zM772 279h1v1h-1zM772 280h1v1h-1zM772 281h1v1h-1zM772 282h1v1h-1zM772 283h1v1h-1zM772 284h1v1h-1zM772 285h1v1h-1zM772 286h1v1h-1zM772 287h1v1h-1zM772 288h1v1h-1zM772 289h1v1h-1zM772 290h1v1h-1zM772 291h1v1h-1zM772 292h1v1h-1zM772 293h1v1h-1zM772 294h1v1h-1zM772 295h1v1h-1zM772 296h1v1h-1zM772 297h1v1h-1zM772 298h1v1h-1zM772 299h1v1h-1zM772 300h1v1h-1zM772 301h1v1h-1zM772 302h1v1h-1zM772 303h1v1h-1zM772 304h1v1h-1zM772 305h1v1h-1zM772 306h1v1h-1zM772 307h1v1h-1zM772 308h1v1h-1zM772 309h1v1h-1zM772 310h1v1h-1zM772 311h1v1h-1zM772 312h1v1h-1zM772 313h1v1h-1zM772 314h1v1h-1zM772 315h1v1h-1zM772 316h1v1h-1zM772 317h1v1h-1zM772 318h1v1h-1zM772 319h1v1h-1zM772 320h1v1h-1zM772 321h1v1h-1zM772 322h1v1h-1zM772 323h1v1h-1zM772 324h1v1h-1zM772 325h1v1h-1zM772 326h1v1h-1zM772 327h1v1h-1zM772 328h1v1h-1zM772 329h1v1h-1zM772 330h1v1h-1zM772 331h1v1h-1zM772 332h1v1h-1zM772 333h1v1h-1zM772 334h1v1h-1zM772 335h1v1h-1zM772 336h1v1h-1zM772 337h1v1h-1zM772 338h1v1h-1zM772 339h1v1h-1zM772 340h1v1h-1zM772 341h1v1h-1zM772 342h1v1h-1zM772 343h1v1h-1zM772 344h1v1h-1zM772 345h1v1h-1zM772 346h1v1h-1zM772 347h1v1h-1zM772 348h1v1h-1zM772 349h1v1h-1zM772 350h1v1h-1zM772 351h1v1h-1zM772 352h1v1h-1zM772 353h1v1h-1zM772 354h1v1h-1zM772 355h1v1h-1zM772 356h1v1h-1zM772 357h1v1h-1zM772 358h1v1h-1zM772 359h1v1h-1zM772 360h1v1h-1zM772 361h1v1h-1zM772 362h1v1h-1zM772 363h1v1h-1zM772 364h1v1h-1zM772 365h1v1h-1zM772 366h1v1h-1zM772 367h1v1h-1zM772 368h1v1h-1zM772 369h1v1h-1zM772 370h1v1h-1zM772 371h1v1h-1zM772 372h1v1h-1zM772 373h1v1h-1zM772 374h1v1h-1zM772 375h1v1h-1zM772 376h1v1h-1zM772 377h1v1h-1zM772 378h1v1h-1zM772 379h1v1h-1zM772 380h1v1h-1zM772 381h1v1h-1zM772 382h1v1h-1zM772 383h1v1h-1zM772 384h1v1h-1zM772 385h1v1h-1zM772 386h1v1h-1zM772 387h1v1h-1zM772 388h1v1h-1zM772 389h1v1h-1zM772 390h1v1h-1zM772 391h1v1h-1zM772 392h1v1h-1zM772 393h1v1h-1zM772 394h1v1h-1zM772 395h1v1h-1zM772 396h1v1h-1zM772 397h1v1h-1zM772 398h1v1h-1zM772 399h1v1h-1zM772 400h1v1h-1zM772 401h1v1h-1zM772 402h1v1h-1zM772 403h1v1h-1zM772 404h1v1h-1zM772 405h1v1h-1zM772 406h1v1h-1zM772 407h1v1h-1zM772 408h1v1h-1zM772 409h1v1h-1zM772 410h1v1h-1zM772 411h1v1h-1zM772 412h1v1h-1zM772 413h1v1h-1zM772 414h1v1h-1zM772 415h1v1h-1zM772 416h1v1h-1zM772 417h1v1h-1zM772 418h1v1h-1zM772 419h1v1h-1zM772 420h1v1h-1zM772 421h1v1h-1zM772 422h1v1h-1zM772 423h1v1h-1zM772 424h1v1h-1zM772 425h1v1h-1zM772 426h1v1h-1zM772 428h1v1h-1zM773 428h1v1h-1zM774 428h1v1h-1zM775 428h1v1h-1zM776 428h1v1h-1zM777 428h1v1h-1zM778 428h1v1h-1zM779 428h1v1h-1zM780 428h1v1h-1zM781 428h1v1h-1zM782 428h1v1h-1zM773 430h1v1h-1zM774 432h1v1h-1zM775 434h1v1h-1zM776 436h1v1h-1zM296 428h1v1h-1zM294 429h1v1h-1zM295 429h1v1h-1zM292 430h1v1h-1zM293 430h1v1h-1zM290 431h1v1h-1zM291 431h1v1h-1zM288 432h1v1h-1zM289 432h1v1h-1zM298 428h1v1h-1zM298 429h1v1h-1zM298 430h1v1h-1zM298 431h1v1h-1zM298 432h1v1h-1zM298 433h1v1h-1zM298 434h1v1h-1zM298 435h1v1h-1zM298 436h1v1h-1zM298 437h1v1h-1zM298 438h1v1h-1zM299 428h1v1h-1zM300 428h1v1h-1zM301 428h1v1h-1zM302 428h1v1h-1zM303 428h1v1h-1zM304 428h1v1h-1zM305 428h1v1h-1zM306 428h1v1h-1zM307 428h1v1h-1zM308 428h1v1h-1zM309 428h1v1h-1zM310 428h1v1h-1zM311 428h1v1h-1zM312 428h1v1h-1zM313 428h1v1h-1zM314 428h1v1h-1zM315 428h1v1h-1zM316 428h1v1h-1zM317 428h1v1h-1zM318 428h1v1h-1zM319 428h1v1h-1zM320 428h1v1h-1zM321 428h1v1h-1zM322 428h1v1h-1zM323 428h1v1h-1zM324 428h1v1h-1zM325 428h1v1h-1zM326 428h1v1h-1zM327 428h1v1h-1zM328 428h1v1h-1zM329 428h1v1h-1zM330 428h1v1h-1zM331 428h1v1h-1zM332 428h1v1h-1zM333 428h1v1h-1zM334 428h1v1h-1zM335 428h1v1h-1zM336 428h1v1h-1zM337 428h1v1h-1zM338 428h1v1h-1zM339 428h1v1h-1zM340 428h1v1h-1zM341 428h1v1h-1zM342 428h1v1h-1zM343 428h1v1h-1zM344 428h1v1h-1zM345 428h1v1h-1zM346 428h1v1h-1zM347 428h1v1h-1zM348 428h1v1h-1zM349 428h1v1h-1zM350 428h1v1h-1zM351 428h1v1h-1zM352 428h1v1h-1zM353 428h1v1h-1zM354 428h1v1h-1zM355 428h1v1h-1zM356 428h1v1h-1zM357 428h1v1h-1zM358 428h1v1h-1zM359 428h1v1h-1zM360 428h1v1h-1zM361 428h1v1h-1zM362 428h1v1h-1zM363 428h1v1h-1zM364 428h1v1h-1zM365 428h1v1h-1zM366 428h1v1h-1zM367 428h1v1h-1zM368 428h1v1h-1zM369 428h1v1h-1zM370 428h1v1h-1zM371 428h1v1h-1zM372 428h1v1h-1zM373 428h1v1h-1zM374 428h1v1h-1zM375 428h1v1h-1zM376 428h1v1h-1zM377 428h1v1h-1zM378 428h1v1h-1zM379 428h1v1h-1zM380 428h1v1h-1zM381 428h1v1h-1zM382 428h1v1h-1zM383 428h1v1h-1zM384 428h1v1h-1zM385 428h1v1h-1zM386 428h1v1h-1zM387 428h1v1h-1zM388 428h1v1h-1zM389 428h1v1h-1zM390 428h1v1h-1zM391 428h1v1h-1zM392 428h1v1h-1zM393 428h1v1h-1zM394 428h1v1h-1zM395 428h1v1h-1zM396 428h1v1h-1zM397 428h1v1h-1zM398 428h1v1h-1zM399 428h1v1h-1zM400 428h1v1h-1zM401 428h1v1h-1zM402 428h1v1h-1zM403 428h1v1h-1zM404 428h1v1h-1zM405 428h1v1h-1zM406 428h1v1h-1zM407 428h1v1h-1zM408 428h1v1h-1zM409 428h1v1h-1zM410 428h1v1h-1zM411 428h1v1h-1zM412 428h1v1h-1zM413 428h1v1h-1zM414 428h1v1h-1zM415 428h1v1h-1zM416 428h1v1h-1zM417 428h1v1h-1zM418 428h1v1h-1zM419 428h1v1h-1zM420 428h1v1h-1zM421 428h1v1h-1zM422 428h1v1h-1zM423 428h1v1h-1zM424 428h1v1h-1zM425 428h1v1h-1zM426 428h1v1h-1zM427 428h1v1h-1zM428 428h1v1h-1zM429 428h1v1h-1zM430 428h1v1h-1zM431 428h1v1h-1zM432 428h1v1h-1zM433 428h1v1h-1zM434 428h1v1h-1zM435 428h1v1h-1zM436 428h1v1h-1zM437 428h1v1h-1zM438 428h1v1h-1zM439 428h1v1h-1zM440 428h1v1h-1zM441 428h1v1h-1zM442 428h1v1h-1zM443 428h1v1h-1zM444 428h1v1h-1zM445 428h1v1h-1zM446 428h1v1h-1zM447 428h1v1h-1zM448 428h1v1h-1zM449 428h1v1h-1zM450 428h1v1h-1zM451 428h1v1h-1zM452 428h1v1h-1zM453 428h1v1h-1zM454 428h1v1h-1zM455 428h1v1h-1zM456 428h1v1h-1zM457 428h1v1h-1zM458 428h1v1h-1zM459 428h1v1h-1zM460 428h1v1h-1zM461 428h1v1h-1zM462 428h1v1h-1zM463 428h1v1h-1zM464 428h1v1h-1zM465 428h1v1h-1zM466 428h1v1h-1zM467 428h1v1h-1zM468 428h1v1h-1zM469 428h1v1h-1zM470 428h1v1h-1zM471 428h1v1h-1zM472 428h1v1h-1zM473 428h1v1h-1zM474 428h1v1h-1zM475 428h1v1h-1zM476 428h1v1h-1zM477 428h1v1h-1zM478 428h1v1h-1zM479 428h1v1h-1zM480 428h1v1h-1zM481 428h1v1h-1zM482 428h1v1h-1zM483 428h1v1h-1zM484 428h1v1h-1zM485 428h1v1h-1zM486 428h1v1h-1zM487 428h1v1h-1zM488 428h1v1h-1zM489 428h1v1h-1zM490 428h1v1h-1zM491 428h1v1h-1zM492 428h1v1h-1zM493 428h1v1h-1zM494 428h1v1h-1zM495 428h1v1h-1zM496 428h1v1h-1zM497 428h1v1h-1zM498 428h1v1h-1zM499 428h1v1h-1zM500 428h1v1h-1zM501 428h1v1h-1zM502 428h1v1h-1zM503 428h1v1h-1zM504 428h1v1h-1zM505 428h1v1h-1zM506 428h1v1h-1zM507 428h1v1h-1zM508 428h1v1h-1zM509 428h1v1h-1zM510 428h1v1h-1zM511 428h1v1h-1zM512 428h1v1h-1zM513 428h1v1h-1zM514 428h1v1h-1zM515 428h1v1h-1zM516 428h1v1h-1zM517 428h1v1h-1zM518 428h1v1h-1zM519 428h1v1h-1zM520 428h1v1h-1zM521 428h1v1h-1zM522 428h1v1h-1zM523 428h1v1h-1zM524 428h1v1h-1zM525 428h1v1h-1zM526 428h1v1h-1zM527 428h1v1h-1zM528 428h1v1h-1zM529 428h1v1h-1zM530 428h1v1h-1zM531 428h1v1h-1zM532 428h1v1h-1zM533 428h1v1h-1zM534 428h1v1h-1zM535 428h1v1h-1zM536 428h1v1h-1zM537 428h1v1h-1zM538 428h1v1h-1zM539 428h1v1h-1zM540 428h1v1h-1zM541 428h1v1h-1zM542 428h1v1h-1zM543 428h1v1h-1zM544 428h1v1h-1zM545 428h1v1h-1zM546 428h1v1h-1zM547 428h1v1h-1zM548 428h1v1h-1zM549 428h1v1h-1zM550 428h1v1h-1zM551 428h1v1h-1zM552 428h1v1h-1zM553 428h1v1h-1zM554 428h1v1h-1zM555 428h1v1h-1zM556 428h1v1h-1zM557 428h1v1h-1zM558 428h1v1h-1zM559 428h1v1h-1zM560 428h1v1h-1zM561 428h1v1h-1zM562 428h1v1h-1zM563 428h1v1h-1zM564 428h1v1h-1zM565 428h1v1h-1zM566 428h1v1h-1zM567 428h1v1h-1zM568 428h1v1h-1zM569 428h1v1h-1zM570 428h1v1h-1zM571 428h1v1h-1zM572 428h1v1h-1zM573 428h1v1h-1zM574 428h1v1h-1zM575 428h1v1h-1zM576 428h1v1h-1zM577 428h1v1h-1zM578 428h1v1h-1zM579 428h1v1h-1zM580 428h1v1h-1zM581 428h1v1h-1zM582 428h1v1h-1zM583 428h1v1h-1zM584 428h1v1h-1zM585 428h1v1h-1zM586 428h1v1h-1zM587 428h1v1h-1zM588 428h1v1h-1zM589 428h1v1h-1zM590 428h1v1h-1zM591 428h1v1h-1zM592 428h1v1h-1zM593 428h1v1h-1zM594 428h1v1h-1zM595 428h1v1h-1zM596 428h1v1h-1zM597 428h1v1h-1zM598 428h1v1h-1zM599 428h1v1h-1zM600 428h1v1h-1zM601 428h1v1h-1zM602 428h1v1h-1zM603 428h1v1h-1zM604 428h1v1h-1zM605 428h1v1h-1zM606 428h1v1h-1zM607 428h1v1h-1zM608 428h1v1h-1zM609 428h1v1h-1zM610 428h1v1h-1zM611 428h1v1h-1zM612 428h1v1h-1zM613 428h1v1h-1zM614 428h1v1h-1zM615 428h1v1h-1zM616 428h1v1h-1zM617 428h1v1h-1zM618 428h1v1h-1zM619 428h1v1h-1zM620 428h1v1h-1zM621 428h1v1h-1zM622 428h1v1h-1zM623 428h1v1h-1zM624 428h1v1h-1zM625 428h1v1h-1zM626 428h1v1h-1zM627 428h1v1h-1zM628 428h1v1h-1zM629 428h1v1h-1zM630 428h1v1h-1zM631 428h1v1h-1zM632 428h1v1h-1zM633 428h1v1h-1zM634 428h1v1h-1zM635 428h1v1h-1zM636 428h1v1h-1zM637 428h1v1h-1zM638 428h1v1h-1zM639 428h1v1h-1zM640 428h1v1h-1zM641 428h1v1h-1zM642 428h1v1h-1zM643 428h1v1h-1zM644 428h1v1h-1zM645 428h1v1h-1zM646 428h1v1h-1zM647 428h1v1h-1zM648 428h1v1h-1zM649 428h1v1h-1zM650 428h1v1h-1zM651 428h1v1h-1zM652 428h1v1h-1zM653 428h1v1h-1zM654 428h1v1h-1zM655 428h1v1h-1zM656 428h1v1h-1zM657 428h1v1h-1zM658 428h1v1h-1zM659 428h1v1h-1zM660 428h1v1h-1zM661 428h1v1h-1zM662 428h1v1h-1zM663 428h1v1h-1zM664 428h1v1h-1zM665 428h1v1h-1zM666 428h1v1h-1zM667 428h1v1h-1zM668 428h1v1h-1zM669 428h1v1h-1zM670 428h1v1h-1zM671 428h1v1h-1zM672 428h1v1h-1zM673 428h1v1h-1zM674 428h1v1h-1zM675 428h1v1h-1zM676 428h1v1h-1zM677 428h1v1h-1zM678 428h1v1h-1zM679 428h1v1h-1zM680 428h1v1h-1zM681 428h1v1h-1zM682 428h1v1h-1zM683 428h1v1h-1zM684 428h1v1h-1zM685 428h1v1h-1zM686 428h1v1h-1zM687 428h1v1h-1zM688 428h1v1h-1zM689 428h1v1h-1zM690 428h1v1h-1zM691 428h1v1h-1zM692 428h1v1h-1zM693 428h1v1h-1zM694 428h1v1h-1zM695 428h1v1h-1zM696 428h1v1h-1zM697 428h1v1h-1zM698 428h1v1h-1zM699 428h1v1h-1zM700 428h1v1h-1zM701 428h1v1h-1zM702 428h1v1h-1zM703 428h1v1h-1zM704 428h1v1h-1zM705 428h1v1h-1zM706 428h1v1h-1zM707 428h1v1h-1zM708 428h1v1h-1zM709 428h1v1h-1zM710 428h1v1h-1zM711 428h1v1h-1zM712 428h1v1h-1zM713 428h1v1h-1zM714 428h1v1h-1zM715 428h1v1h-1zM716 428h1v1h-1zM717 428h1v1h-1zM718 428h1v1h-1zM719 428h1v1h-1zM720 428h1v1h-1zM721 428h1v1h-1zM722 428h1v1h-1zM723 428h1v1h-1zM724 428h1v1h-1zM725 428h1v1h-1zM726 428h1v1h-1zM727 428h1v1h-1zM728 428h1v1h-1zM729 428h1v1h-1zM730 428h1v1h-1zM731 428h1v1h-1zM732 428h1v1h-1zM733 428h1v1h-1zM734 428h1v1h-1zM735 428h1v1h-1zM736 428h1v1h-1zM737 428h1v1h-1zM738 428h1v1h-1zM739 428h1v1h-1zM740 428h1v1h-1zM741 428h1v1h-1zM742 428h1v1h-1zM743 428h1v1h-1zM744 428h1v1h-1zM745 428h1v1h-1zM746 428h1v1h-1zM747 428h1v1h-1zM748 428h1v1h-1zM749 428h1v1h-1zM750 428h1v1h-1zM751 428h1v1h-1zM752 428h1v1h-1zM753 428h1v1h-1zM754 428h1v1h-1zM755 428h1v1h-1zM756 428h1v1h-1zM757 428h1v1h-1zM759 428h1v1h-1zM759 429h1v1h-1zM759 430h1v1h-1zM759 431h1v1h-1zM759 432h1v1h-1zM759 433h1v1h-1zM759 434h1v1h-1zM759 435h1v1h-1zM759 436h1v1h-1zM759 437h1v1h-1zM759 438h1v1h-1zM760 429h1v1h-1zM761 429h1v1h-1zM762 430h1v1h-1zM763 430h1v1h-1zM764 431h1v1h-1zM765 431h1v1h-1zM766 432h1v1h-1zM767 432h1v1h-1zM768 433h1v1h-1z" fill="#fff"/><path d="M777 266h1v1h-1zM778 268h1v1h-1zM779 270h1v1h-1zM780 272h1v1h-1zM781 274h1v1h-1zM773 276h1v1h-1zM774 276h1v1h-1zM775 276h1v1h-1zM776 276h1v1h-1zM777 276h1v1h-1zM778 276h1v1h-1zM779 276h1v1h-1zM780 276h1v1h-1zM781 276h1v1h-1zM782 276h1v1h-1zM782 278h1v1h-1zM782 279h1v1h-1zM782 280h1v1h-1zM782 281h1v1h-1zM782 282h1v1h-1zM782 283h1v1h-1zM782 284h1v1h-1zM782 285h1v1h-1zM782 286h1v1h-1zM782 287h1v1h-1zM782 288h1v1h-1zM782 289h1v1h-1zM782 290h1v1h-1zM782 291h1v1h-1zM782 292h1v1h-1zM782 293h1v1h-1zM782 294h1v1h-1zM782 295h1v1h-1zM782 296h1v1h-1zM782 297h1v1h-1zM782 298h1v1h-1zM782 299h1v1h-1zM782 300h1v1h-1zM782 301h1v1h-1zM782 302h1v1h-1zM782 303h1v1h-1zM782 304h1v1h-1zM782 305h1v1h-1zM782 306h1v1h-1zM782 307h1v1h-1zM782 308h1v1h-1zM782 309h1v1h-1zM782 310h1v1h-1zM782 311h1v1h-1zM782 312h1v1h-1zM782 313h1v1h-1zM782 314h1v1h-1zM782 315h1v1h-1zM782 316h1v1h-1zM782 317h1v1h-1zM782 318h1v1h-1zM782 319h1v1h-1zM782 320h1v1h-1zM782 321h1v1h-1zM782 322h1v1h-1zM782 323h1v1h-1zM782 324h1v1h-1zM782 325h1v1h-1zM782 326h1v1h-1zM782 327h1v1h-1zM782 328h1v1h-1zM782 329h1v1h-1zM782 330h1v1h-1zM782 331h1v1h-1zM782 332h1v1h-1zM782 333h1v1h-1zM782 334h1v1h-1zM782 335h1v1h-1zM782 336h1v1h-1zM782 337h1v1h-1zM782 338h1v1h-1zM782 339h1v1h-1zM782 340h1v1h-1zM782 341h1v1h-1zM782 342h1v1h-1zM782 343h1v1h-1zM782 344h1v1h-1zM782 345h1v1h-1zM782 346h1v1h-1zM782 347h1v1h-1zM782 348h1v1h-1zM782 349h1v1h-1zM782 350h1v1h-1zM782 351h1v1h-1zM782 352h1v1h-1zM782 353h1v1h-1zM782 354h1v1h-1zM782 355h1v1h-1zM782 356h1v1h-1zM782 357h1v1h-1zM782 358h1v1h-1zM782 359h1v1h-1zM782 360h1v1h-1zM782 361h1v1h-1zM782 362h1v1h-1zM782 363h1v1h-1zM782 364h1v1h-1zM782 365h1v1h-1zM782 366h1v1h-1zM782 367h1v1h-1zM782 368h1v1h-1zM782 369h1v1h-1zM782 370h1v1h-1zM782 371h1v1h-1zM782 372h1v1h-1zM782 373h1v1h-1zM782 374h1v1h-1zM782 375h1v1h-1zM782 376h1v1h-1zM782 377h1v1h-1zM782 378h1v1h-1zM782 379h1v1h-1zM782 380h1v1h-1zM782 381h1v1h-1zM782 382h1v1h-1zM782 383h1v1h-1zM782 384h1v1h-1zM782 385h1v1h-1zM782 386h1v1h-1zM782 387h1v1h-1zM782 388h1v1h-1zM782 389h1v1h-1zM782 390h1v1h-1zM782 391h1v1h-1zM782 392h1v1h-1zM782 393h1v1h-1zM782 394h1v1h-1zM782 395h1v1h-1zM782 396h1v1h-1zM782 397h1v1h-1zM782 398h1v1h-1zM782 399h1v1h-1zM782 400h1v1h-1zM782 401h1v1h-1zM782 402h1v1h-1zM782 403h1v1h-1zM782 404h1v1h-1zM782 405h1v1h-1zM782 406h1v1h-1zM782 407h1v1h-1zM782 408h1v1h-1zM782 409h1v1h-1zM782 410h1v1h-1zM782 411h1v1h-1zM782 412h1v1h-1zM782 413h1v1h-1zM782 414h1v1h-1zM782 415h1v1h-1zM782 416h1v1h-1zM782 417h1v1h-1zM782 418h1v1h-1zM782 419h1v1h-1zM782 420h1v1h-1zM782 421h1v1h-1zM782 422h1v1h-1zM782 423h1v1h-1zM782 424h1v1h-1zM782 425h1v1h-1zM782 426h1v1h-1zM773 426h1v1h-1zM774 426h1v1h-1zM775 426h1v1h-1zM776 426h1v1h-1zM777 426h1v1h-1zM778 426h1v1h-1zM779 426h1v1h-1zM780 426h1v1h-1zM781 426h1v1h-1zM781 429h1v1h-1zM782 429h1v1h-1zM780 430h1v1h-1zM780 431h1v1h-1zM779 432h1v1h-1zM779 433h1v1h-1zM778 434h1v1h-1zM778 435h1v1h-1zM777 436h1v1h-1zM777 437h1v1h-1zM777 438h1v1h-1zM296 429h1v1h-1zM296 430h1v1h-1zM296 431h1v1h-1zM296 432h1v1h-1zM296 433h1v1h-1zM296 434h1v1h-1zM296 435h1v1h-1zM296 436h1v1h-1zM296 437h1v1h-1zM296 438h1v1h-1zM286 433h1v1h-1zM287 433h1v1h-1zM288 434h1v1h-1zM289 434h1v1h-1zM290 435h1v1h-1zM291 435h1v1h-1zM292 436h1v1h-1zM293 436h1v1h-1zM294 437h1v1h-1zM295 437h1v1h-1zM757 429h1v1h-1zM757 430h1v1h-1zM757 431h1v1h-1zM757 432h1v1h-1zM757 433h1v1h-1zM757 434h1v1h-1zM757 435h1v1h-1zM757 436h1v1h-1zM757 437h1v1h-1zM757 438h1v1h-1zM299 438h1v1h-1zM300 438h1v1h-1zM301 438h1v1h-1zM302 438h1v1h-1zM303 438h1v1h-1zM304 438h1v1h-1zM305 438h1v1h-1zM306 438h1v1h-1zM307 438h1v1h-1zM308 438h1v1h-1zM309 438h1v1h-1zM310 438h1v1h-1zM311 438h1v1h-1zM312 438h1v1h-1zM313 438h1v1h-1zM314 438h1v1h-1zM315 438h1v1h-1zM316 438h1v1h-1zM317 438h1v1h-1zM318 438h1v1h-1zM319 438h1v1h-1zM320 438h1v1h-1zM321 438h1v1h-1zM322 438h1v1h-1zM323 438h1v1h-1zM324 438h1v1h-1zM325 438h1v1h-1zM326 438h1v1h-1zM327 438h1v1h-1zM328 438h1v1h-1zM329 438h1v1h-1zM330 438h1v1h-1zM331 438h1v1h-1zM332 438h1v1h-1zM333 438h1v1h-1zM334 438h1v1h-1zM335 438h1v1h-1zM336 438h1v1h-1zM337 438h1v1h-1zM338 438h1v1h-1zM339 438h1v1h-1zM340 438h1v1h-1zM341 438h1v1h-1zM342 438h1v1h-1zM343 438h1v1h-1zM344 438h1v1h-1zM345 438h1v1h-1zM346 438h1v1h-1zM347 438h1v1h-1zM348 438h1v1h-1zM349 438h1v1h-1zM350 438h1v1h-1zM351 438h1v1h-1zM352 438h1v1h-1zM353 438h1v1h-1zM354 438h1v1h-1zM355 438h1v1h-1zM356 438h1v1h-1zM357 438h1v1h-1zM358 438h1v1h-1zM359 438h1v1h-1zM360 438h1v1h-1zM361 438h1v1h-1zM362 438h1v1h-1zM363 438h1v1h-1zM364 438h1v1h-1zM365 438h1v1h-1zM366 438h1v1h-1zM367 438h1v1h-1zM368 438h1v1h-1zM369 438h1v1h-1zM370 438h1v1h-1zM371 438h1v1h-1zM372 438h1v1h-1zM373 438h1v1h-1zM374 438h1v1h-1zM375 438h1v1h-1zM376 438h1v1h-1zM377 438h1v1h-1zM378 438h1v1h-1zM379 438h1v1h-1zM380 438h1v1h-1zM381 438h1v1h-1zM382 438h1v1h-1zM383 438h1v1h-1zM384 438h1v1h-1zM385 438h1v1h-1zM386 438h1v1h-1zM387 438h1v1h-1zM388 438h1v1h-1zM389 438h1v1h-1zM390 438h1v1h-1zM391 438h1v1h-1zM392 438h1v1h-1zM393 438h1v1h-1zM394 438h1v1h-1zM395 438h1v1h-1zM396 438h1v1h-1zM397 438h1v1h-1zM398 438h1v1h-1zM399 438h1v1h-1zM400 438h1v1h-1zM401 438h1v1h-1zM402 438h1v1h-1zM403 438h1v1h-1zM404 438h1v1h-1zM405 438h1v1h-1zM406 438h1v1h-1zM407 438h1v1h-1zM408 438h1v1h-1zM409 438h1v1h-1zM410 438h1v1h-1zM411 438h1v1h-1zM412 438h1v1h-1zM413 438h1v1h-1zM414 438h1v1h-1zM415 438h1v1h-1zM416 438h1v1h-1zM417 438h1v1h-1zM418 438h1v1h-1zM419 438h1v1h-1zM420 438h1v1h-1zM421 438h1v1h-1zM422 438h1v1h-1zM423 438h1v1h-1zM424 438h1v1h-1zM425 438h1v1h-1zM426 438h1v1h-1zM427 438h1v1h-1zM428 438h1v1h-1zM429 438h1v1h-1zM430 438h1v1h-1zM431 438h1v1h-1zM432 438h1v1h-1zM433 438h1v1h-1zM434 438h1v1h-1zM435 438h1v1h-1zM436 438h1v1h-1zM437 438h1v1h-1zM438 438h1v1h-1zM439 438h1v1h-1zM440 438h1v1h-1zM441 438h1v1h-1zM442 438h1v1h-1zM443 438h1v1h-1zM444 438h1v1h-1zM445 438h1v1h-1zM446 438h1v1h-1zM447 438h1v1h-1zM448 438h1v1h-1zM449 438h1v1h-1zM450 438h1v1h-1zM451 438h1v1h-1zM452 438h1v1h-1zM453 438h1v1h-1zM454 438h1v1h-1zM455 438h1v1h-1zM456 438h1v1h-1zM457 438h1v1h-1zM458 438h1v1h-1zM459 438h1v1h-1zM460 438h1v1h-1zM461 438h1v1h-1zM462 438h1v1h-1zM463 438h1v1h-1zM464 438h1v1h-1zM465 438h1v1h-1zM466 438h1v1h-1zM467 438h1v1h-1zM468 438h1v1h-1zM469 438h1v1h-1zM470 438h1v1h-1zM471 438h1v1h-1zM472 438h1v1h-1zM473 438h1v1h-1zM474 438h1v1h-1zM475 438h1v1h-1zM476 438h1v1h-1zM477 438h1v1h-1zM478 438h1v1h-1zM479 438h1v1h-1zM480 438h1v1h-1zM481 438h1v1h-1zM482 438h1v1h-1zM483 438h1v1h-1zM484 438h1v1h-1zM485 438h1v1h-1zM486 438h1v1h-1zM487 438h1v1h-1zM488 438h1v1h-1zM489 438h1v1h-1zM490 438h1v1h-1zM491 438h1v1h-1zM492 438h1v1h-1zM493 438h1v1h-1zM494 438h1v1h-1zM495 438h1v1h-1zM496 438h1v1h-1zM497 438h1v1h-1zM498 438h1v1h-1zM499 438h1v1h-1zM500 438h1v1h-1zM501 438h1v1h-1zM502 438h1v1h-1zM503 438h1v1h-1zM504 438h1v1h-1zM505 438h1v1h-1zM506 438h1v1h-1zM507 438h1v1h-1zM508 438h1v1h-1zM509 438h1v1h-1zM510 438h1v1h-1zM511 438h1v1h-1zM512 438h1v1h-1zM513 438h1v1h-1zM514 438h1v1h-1zM515 438h1v1h-1zM516 438h1v1h-1zM517 438h1v1h-1zM518 438h1v1h-1zM519 438h1v1h-1zM520 438h1v1h-1zM521 438h1v1h-1zM522 438h1v1h-1zM523 438h1v1h-1zM524 438h1v1h-1zM525 438h1v1h-1zM526 438h1v1h-1zM527 438h1v1h-1zM528 438h1v1h-1zM529 438h1v1h-1zM530 438h1v1h-1zM531 438h1v1h-1zM532 438h1v1h-1zM533 438h1v1h-1zM534 438h1v1h-1zM535 438h1v1h-1zM536 438h1v1h-1zM537 438h1v1h-1zM538 438h1v1h-1zM539 438h1v1h-1zM540 438h1v1h-1zM541 438h1v1h-1zM542 438h1v1h-1zM543 438h1v1h-1zM544 438h1v1h-1zM545 438h1v1h-1zM546 438h1v1h-1zM547 438h1v1h-1zM548 438h1v1h-1zM549 438h1v1h-1zM550 438h1v1h-1zM551 438h1v1h-1zM552 438h1v1h-1zM553 438h1v1h-1zM554 438h1v1h-1zM555 438h1v1h-1zM556 438h1v1h-1zM557 438h1v1h-1zM558 438h1v1h-1zM559 438h1v1h-1zM560 438h1v1h-1zM561 438h1v1h-1zM562 438h1v1h-1zM563 438h1v1h-1zM564 438h1v1h-1zM565 438h1v1h-1zM566 438h1v1h-1zM567 438h1v1h-1zM568 438h1v1h-1zM569 438h1v1h-1zM570 438h1v1h-1zM571 438h1v1h-1zM572 438h1v1h-1zM573 438h1v1h-1zM574 438h1v1h-1zM575 438h1v1h-1zM576 438h1v1h-1zM577 438h1v1h-1zM578 438h1v1h-1zM579 438h1v1h-1zM580 438h1v1h-1zM581 438h1v1h-1zM582 438h1v1h-1zM583 438h1v1h-1zM584 438h1v1h-1zM585 438h1v1h-1zM586 438h1v1h-1zM587 438h1v1h-1zM588 438h1v1h-1zM589 438h1v1h-1zM590 438h1v1h-1zM591 438h1v1h-1zM592 438h1v1h-1zM593 438h1v1h-1zM594 438h1v1h-1zM595 438h1v1h-1zM596 438h1v1h-1zM597 438h1v1h-1zM598 438h1v1h-1zM599 438h1v1h-1zM600 438h1v1h-1zM601 438h1v1h-1zM602 438h1v1h-1zM603 438h1v1h-1zM604 438h1v1h-1zM605 438h1v1h-1zM606 438h1v1h-1zM607 438h1v1h-1zM608 438h1v1h-1zM609 438h1v1h-1zM610 438h1v1h-1zM611 438h1v1h-1zM612 438h1v1h-1zM613 438h1v1h-1zM614 438h1v1h-1zM615 438h1v1h-1zM616 438h1v1h-1zM617 438h1v1h-1zM618 438h1v1h-1zM619 438h1v1h-1zM620 438h1v1h-1zM621 438h1v1h-1zM622 438h1v1h-1zM623 438h1v1h-1zM624 438h1v1h-1zM625 438h1v1h-1zM626 438h1v1h-1zM627 438h1v1h-1zM628 438h1v1h-1zM629 438h1v1h-1zM630 438h1v1h-1zM631 438h1v1h-1zM632 438h1v1h-1zM633 438h1v1h-1zM634 438h1v1h-1zM635 438h1v1h-1zM636 438h1v1h-1zM637 438h1v1h-1zM638 438h1v1h-1zM639 438h1v1h-1zM640 438h1v1h-1zM641 438h1v1h-1zM642 438h1v1h-1zM643 438h1v1h-1zM644 438h1v1h-1zM645 438h1v1h-1zM646 438h1v1h-1zM647 438h1v1h-1zM648 438h1v1h-1zM649 438h1v1h-1zM650 438h1v1h-1zM651 438h1v1h-1zM652 438h1v1h-1zM653 438h1v1h-1zM654 438h1v1h-1zM655 438h1v1h-1zM656 438h1v1h-1zM657 438h1v1h-1zM658 438h1v1h-1zM659 438h1v1h-1zM660 438h1v1h-1zM661 438h1v1h-1zM662 438h1v1h-1zM663 438h1v1h-1zM664 438h1v1h-1zM665 438h1v1h-1zM666 438h1v1h-1zM667 438h1v1h-1zM668 438h1v1h-1zM669 438h1v1h-1zM670 438h1v1h-1zM671 438h1v1h-1zM672 438h1v1h-1zM673 438h1v1h-1zM674 438h1v1h-1zM675 438h1v1h-1zM676 438h1v1h-1zM677 438h1v1h-1zM678 438h1v1h-1zM679 438h1v1h-1zM680 438h1v1h-1zM681 438h1v1h-1zM682 438h1v1h-1zM683 438h1v1h-1zM684 438h1v1h-1zM685 438h1v1h-1zM686 438h1v1h-1zM687 438h1v1h-1zM688 438h1v1h-1zM689 438h1v1h-1zM690 438h1v1h-1zM691 438h1v1h-1zM692 438h1v1h-1zM693 438h1v1h-1zM694 438h1v1h-1zM695 438h1v1h-1zM696 438h1v1h-1zM697 438h1v1h-1zM698 438h1v1h-1zM699 438h1v1h-1zM700 438h1v1h-1zM701 438h1v1h-1zM702 438h1v1h-1zM703 438h1v1h-1zM704 438h1v1h-1zM705 438h1v1h-1zM706 438h1v1h-1zM707 438h1v1h-1zM708 438h1v1h-1zM709 438h1v1h-1zM710 438h1v1h-1zM711 438h1v1h-1zM712 438h1v1h-1zM713 438h1v1h-1zM714 438h1v1h-1zM715 438h1v1h-1zM716 438h1v1h-1zM717 438h1v1h-1zM718 438h1v1h-1zM719 438h1v1h-1zM720 438h1v1h-1zM721 438h1v1h-1zM722 438h1v1h-1zM723 438h1v1h-1zM724 438h1v1h-1zM725 438h1v1h-1zM726 438h1v1h-1zM727 438h1v1h-1zM728 438h1v1h-1zM729 438h1v1h-1zM730 438h1v1h-1zM731 438h1v1h-1zM732 438h1v1h-1zM733 438h1v1h-1zM734 438h1v1h-1zM735 438h1v1h-1zM736 438h1v1h-1zM737 438h1v1h-1zM738 438h1v1h-1zM739 438h1v1h-1zM740 438h1v1h-1zM741 438h1v1h-1zM742 438h1v1h-1zM743 438h1v1h-1zM744 438h1v1h-1zM745 438h1v1h-1zM746 438h1v1h-1zM747 438h1v1h-1zM748 438h1v1h-1zM749 438h1v1h-1zM750 438h1v1h-1zM751 438h1v1h-1zM752 438h1v1h-1zM753 438h1v1h-1zM754 438h1v1h-1zM755 438h1v1h-1zM756 438h1v1h-1zM768 434h1v1h-1zM766 435h1v1h-1zM767 435h1v1h-1zM764 436h1v1h-1zM765 436h1v1h-1zM762 437h1v1h-1zM763 437h1v1h-1zM760 438h1v1h-1zM761 438h1v1h-1z" fill="#828282"/></svg>
<svg class="a" style="left:0;top:0" width="808" height="623"><text x="29.00" y="14" font-family="Liberation Sans" font-size="11.5" fill="#ececec" textLength="91.53" lengthAdjust="spacingAndGlyphs">xschem - rlc.sch*</text><text x="11.00" y="37" font-family="Liberation Sans" font-size="11" fill="#000" stroke="#000" stroke-width="0.2" textLength="17.73" lengthAdjust="spacingAndGlyphs">File</text><text x="39.00" y="37" font-family="Liberation Sans" font-size="11" fill="#000" stroke="#000" stroke-width="0.2" textLength="18.97" lengthAdjust="spacingAndGlyphs">Edit</text><text x="68.00" y="37" font-family="Liberation Sans" font-size="11" fill="#000" stroke="#000" stroke-width="0.2" textLength="37.92" lengthAdjust="spacingAndGlyphs">Options</text><text x="116.00" y="37" font-family="Liberation Sans" font-size="11" fill="#000" stroke="#000" stroke-width="0.2" textLength="22.67" lengthAdjust="spacingAndGlyphs">View</text><text x="148.98" y="37" font-family="Liberation Sans" font-size="11" fill="#000" stroke="#000" stroke-width="0.2" textLength="51.16" lengthAdjust="spacingAndGlyphs">Properties</text><text x="210.00" y="37" font-family="Liberation Sans" font-size="11" fill="#000" stroke="#000" stroke-width="0.2" textLength="33.03" lengthAdjust="spacingAndGlyphs">Layers</text><text x="253.00" y="37" font-family="Liberation Sans" font-size="11" fill="#000" stroke="#000" stroke-width="0.2" textLength="25.69" lengthAdjust="spacingAndGlyphs">Tools</text><text x="289.00" y="37" font-family="Liberation Sans" font-size="11" fill="#000" stroke="#000" stroke-width="0.2" textLength="37.71" lengthAdjust="spacingAndGlyphs">Symbol</text><text x="334.95" y="37" font-family="Liberation Sans" font-size="11" fill="#000" stroke="#000" stroke-width="0.2" textLength="44.85" lengthAdjust="spacingAndGlyphs">Highlight</text><text x="391.00" y="37" font-family="Liberation Sans" font-size="11" fill="#000" stroke="#000" stroke-width="0.2" textLength="53.37" lengthAdjust="spacingAndGlyphs">Simulation</text><text x="600.00" y="37" font-family="Liberation Sans" font-size="11" fill="#000" stroke="#000" stroke-width="0.2" textLength="33.22" lengthAdjust="spacingAndGlyphs">Waves</text><text x="657.00" y="37" font-family="Liberation Sans" font-size="11" fill="#000" stroke="#000" stroke-width="0.2" textLength="43.79" lengthAdjust="spacingAndGlyphs">Simulate</text><text x="724.97" y="37" font-family="Liberation Sans" font-size="11" fill="#000" stroke="#000" stroke-width="0.2" textLength="31.58" lengthAdjust="spacingAndGlyphs">Netlist</text><text x="774.00" y="37" font-family="Liberation Sans" font-size="11" fill="#000" stroke="#000" stroke-width="0.2" textLength="22.62" lengthAdjust="spacingAndGlyphs">Help</text><text x="309.92" y="199" font-family="Liberation Sans" font-size="11" fill="#f0f0f0" textLength="78.25" lengthAdjust="spacingAndGlyphs">Edit Properties</text><text x="497.96" y="216" font-family="Liberation Sans" font-size="11" fill="#000" stroke="#000" stroke-width="0.2" textLength="74.02" lengthAdjust="spacingAndGlyphs">Input property:</text><text x="294.00" y="237" font-family="Liberation Sans" font-size="11" fill="#000" stroke="#000" stroke-width="0.2" textLength="36.69" lengthAdjust="spacingAndGlyphs">Symbol</text><text x="351.00" y="237" font-family="Liberation Sans" font-size="11" fill="#000" stroke="#000" stroke-width="0.2" textLength="57.69" lengthAdjust="spacingAndGlyphs">lab_pin.sym</text><text x="559.00" y="237" font-family="Liberation Sans" font-size="11" fill="#000" stroke="#000" stroke-width="0.2" textLength="14.91" lengthAdjust="spacingAndGlyphs">OK</text><text x="612.00" y="237" font-family="Liberation Sans" font-size="11" fill="#000" stroke="#000" stroke-width="0.2" textLength="34.25" lengthAdjust="spacingAndGlyphs">Cancel</text><text x="684.00" y="237" font-family="Liberation Sans" font-size="11" fill="#000" stroke="#000" stroke-width="0.2" textLength="24.48" lengthAdjust="spacingAndGlyphs">Load</text><text x="745.87" y="237" font-family="Liberation Sans" font-size="11" fill="#000" stroke="#000" stroke-width="0.2" textLength="18.72" lengthAdjust="spacingAndGlyphs">Del</text><text x="304.00" y="259" font-family="Liberation Sans" font-size="11" fill="#000" stroke="#000" stroke-width="0.2" textLength="104.36" lengthAdjust="spacingAndGlyphs">no change properties</text><text x="430.00" y="259" font-family="Liberation Sans" font-size="11" fill="#000" stroke="#000" stroke-width="0.2" textLength="129.88" lengthAdjust="spacingAndGlyphs">preserve unchanged props</text><text x="582.00" y="259" font-family="Liberation Sans" font-size="11" fill="#000" stroke="#000" stroke-width="0.2" textLength="44.83" lengthAdjust="spacingAndGlyphs">copy cell</text><text x="288.00" y="278" font-family="Liberation Mono" font-size="10" fill="#000" stroke="#000" stroke-width="0.2" textLength="192.03" lengthAdjust="spacingAndGlyphs">name=l2 sig_type=std_logic lab=A</text><text x="6.00" y="613" font-family="Liberation Sans" font-size="11" fill="#000" stroke="#000" stroke-width="0.2" textLength="29.92" lengthAdjust="spacingAndGlyphs">SNAP:</text><text x="40.00" y="613" font-family="Liberation Sans" font-size="11" fill="#000" stroke="#000" stroke-width="0.2" textLength="12.25" lengthAdjust="spacingAndGlyphs">10</text><text x="105.00" y="613" font-family="Liberation Sans" font-size="11" fill="#000" stroke="#000" stroke-width="0.2" textLength="29.54" lengthAdjust="spacingAndGlyphs">GRID:</text><text x="140.00" y="613" font-family="Liberation Sans" font-size="11" fill="#000" stroke="#000" stroke-width="0.2" textLength="11.23" lengthAdjust="spacingAndGlyphs">20</text><text x="203.07" y="613" font-family="Liberation Sans" font-size="11" fill="#000" stroke="#000" stroke-width="0.2" textLength="78.00" lengthAdjust="spacingAndGlyphs">NETLIST MODE:</text><text x="286.00" y="613" font-family="Liberation Sans" font-size="11" fill="#000" stroke="#000" stroke-width="0.2" textLength="25.69" lengthAdjust="spacingAndGlyphs">spice</text><text x="351.00" y="613" font-family="Liberation Sans" font-size="11" fill="#000" stroke="#000" stroke-width="0.2" textLength="311.00" lengthAdjust="spacingAndGlyphs">mouse = -30 -260 - /mnt/x/home/schippes/x/rlc.sch  selected: 1</text></svg></body></html>
